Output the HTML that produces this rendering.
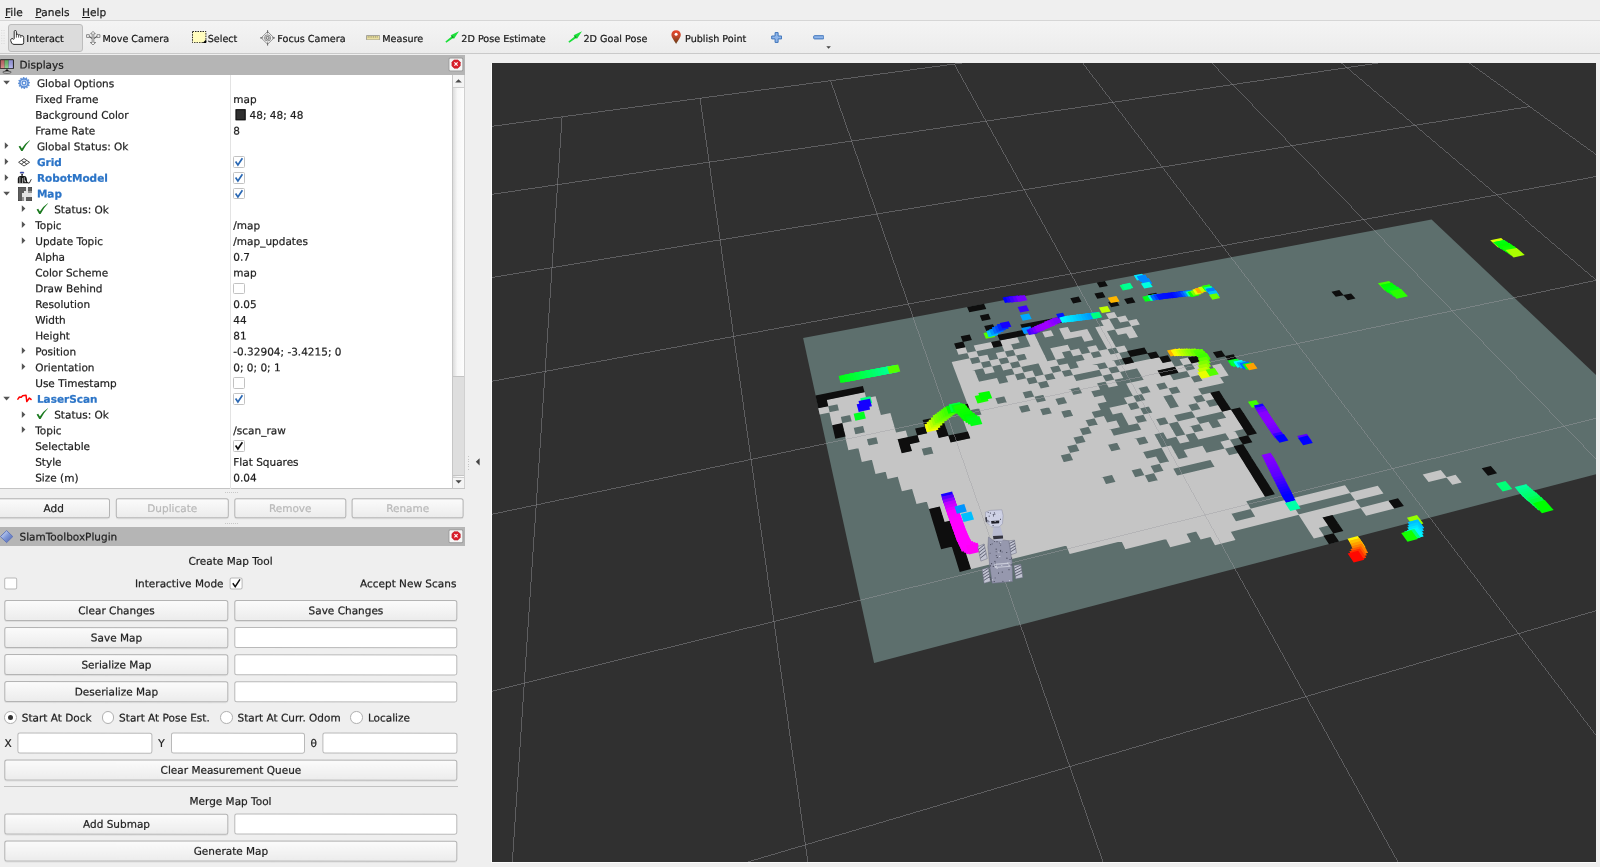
<!DOCTYPE html>
<html><head><meta charset="utf-8"><title>RViz</title><style>
*{box-sizing:border-box;margin:0;padding:0}
html,body{width:1600px;height:867px;overflow:hidden;background:#efefef;font-family:"DejaVu Sans","Liberation Sans",sans-serif;font-size:10.5px;color:#1e1e1e}
#root{position:absolute;left:0;top:0;width:1600px;height:867px}
.a{position:absolute}
.t{position:absolute;left:0;top:0;white-space:nowrap;line-height:15.78px;height:15.78px;transform-origin:0 0;filter:opacity(0.999);-webkit-text-stroke:0.22px}
.menu{position:absolute;left:0;top:0;width:1600px;height:20.8px;background:#efefef;border-bottom:1px solid #d6d6d6}
.menu span{font-size:10.6px}
.tb{position:absolute;left:0;top:21px;width:1600px;height:33px;background:linear-gradient(#f4f4f4,#ececec);border-bottom:1px solid #c9c9c9}
.tb .l{font-size:9.65px;color:#1a1a1a}
.title{position:absolute;left:0;width:464.7px;background:#b5b5b5;}

.close{position:absolute;left:0;top:0;width:14.6px;height:13.9px;background:#f5f5f5;border:0.7px solid #9c9c9c;border-radius:2px;transform-origin:0 0}
.btn{position:absolute;border:1px solid #b4b4b4;border-radius:2.5px;background:linear-gradient(#fbfbfb,#ececec);text-align:center;white-space:nowrap;box-shadow:0 1px 0 #dedede}
.dis{color:#b9b9b9}
.inp{position:absolute;transform-origin:0 0;border:1px solid #b9b9b9;border-radius:2.5px;background:#fff}
.cb{position:absolute;width:11.6px;height:11.6px;border:1px solid #c2c2c2;border-radius:1.5px;background:#fff}
.rb{position:absolute;width:12.6px;height:12.6px;border:1px solid #b0b0b0;border-radius:50%;background:#fff}
.bold{font-weight:bold;color:#2b74c7}
</style></head><body>
<div id="root">
<div class="menu"><span class="t" style="transform:translate(5px,4.9px) skewY(0.05deg);"><u>F</u>ile</span><span class="t" style="transform:translate(35.3px,4.9px) skewY(0.05deg);"><u>P</u>anels</span><span class="t" style="transform:translate(82px,4.9px) skewY(0.05deg);"><u>H</u>elp</span></div>
<div class="tb">
<svg class="a" style="left:0;top:8px" width="8" height="18"><g fill="#d2d2d2"><rect x="1.3" y="1" width="0.9" height="0.9"/><rect x="1.3" y="3.6" width="0.9" height="0.9"/><rect x="1.3" y="6.2" width="0.9" height="0.9"/><rect x="1.3" y="8.8" width="0.9" height="0.9"/><rect x="1.3" y="11.4" width="0.9" height="0.9"/><rect x="1.3" y="14" width="0.9" height="0.9"/><rect x="3.6" y="1" width="0.9" height="0.9"/><rect x="3.6" y="3.6" width="0.9" height="0.9"/><rect x="3.6" y="6.2" width="0.9" height="0.9"/><rect x="3.6" y="8.8" width="0.9" height="0.9"/><rect x="3.6" y="11.4" width="0.9" height="0.9"/><rect x="3.6" y="14" width="0.9" height="0.9"/></g></svg>
<div class="a" style="left:8.2px;top:3.4px;width:74.6px;height:27.2px;background:#dcdcdc;border:1px solid #bdbdbd;border-radius:3px"></div>
<span class="t l" style="transform:translate(26.3px,10.0px) skewY(0.05deg);">Interact</span>
<span class="t l" style="transform:translate(102.5px,10.0px) skewY(0.05deg);">Move Camera</span>
<span class="t l" style="transform:translate(207.7px,10.0px) skewY(0.05deg);">Select</span>
<span class="t l" style="transform:translate(277.3px,10.0px) skewY(0.05deg);">Focus Camera</span>
<span class="t l" style="transform:translate(382.3px,10.0px) skewY(0.05deg);">Measure</span>
<span class="t l" style="transform:translate(461.3px,10.0px) skewY(0.05deg);">2D Pose Estimate</span>
<span class="t l" style="transform:translate(583.5px,10.0px) skewY(0.05deg);">2D Goal Pose</span>
<span class="t l" style="transform:translate(685px,10.0px) skewY(0.05deg);">Publish Point</span>
<svg class="a" style="left:10px;top:9px" width="15" height="15.4"><path d="M4.2 8.6 L4.2 1.6 Q4.2 0.5 5.3 0.5 Q6.4 0.5 6.4 1.6 L6.4 5 Q6.6 4.2 7.5 4.2 Q8.5 4.2 8.6 5.3 Q9 4.7 9.8 4.8 Q10.7 4.9 10.8 5.9 Q11.2 5.5 12 5.6 Q13.6 5.8 13.7 7.4 L13.7 12.8 Q13.7 14.4 12 14.4 L4 14.4 Q2.4 14.4 1.6 13 L0.7 10.6 Q0.4 9 1.8 8.6 Q3.2 8.3 3.6 9.4 Z" fill="#fff" stroke="#2b2b2b" stroke-width="1"/><path d="M6.4 5 V7.6 M8.6 5.3 V7.6 M10.8 6 V7.8" stroke="#2b2b2b" stroke-width="0.8"/></svg><svg class="a" style="left:86.4px;top:9.6px" width="15" height="14.6"><g fill="#fff" stroke="#5a5a5a" stroke-width="0.7" stroke-linejoin="round"><path d="M3.2 5.6 L6.3 7.4 M11.1 5.6 L7.8 7.4" fill="none" stroke-width="1.1"/><rect x="0.6" y="3.7" width="2.7" height="2.7"/><rect x="11" y="3.7" width="2.9" height="2.7"/><path d="M7 0.4 L9.3 2.8 L7.8 2.8 L7.8 11.5 L9.7 11.5 L7 13.9 L4.3 11.5 L6.2 11.5 L6.2 2.8 L4.7 2.8Z"/></g></svg><svg class="a" style="left:191.8px;top:10px" width="15" height="12.4"><rect x="0.5" y="0.5" width="13.4" height="11.2" fill="#fffcbe" stroke="#111" stroke-width="0.9" stroke-dasharray="1.5 1"/><path d="M14.2 8.4 L14.2 11.9 L10.6 11.9Z" fill="#000"/></svg><svg class="a" style="left:260px;top:9.4px" width="15.4" height="15.8"><g fill="none" stroke="#777" stroke-width="0.8"><path d="M7.6 1.6 L14 7.9 L7.6 14.2 L1.2 7.9Z" fill="#f6f6f6"/><circle cx="7.6" cy="7.9" r="3.1" fill="#ddd"/><circle cx="7.6" cy="7.9" r="1.5" stroke="#555"/><path d="M7.6 0.2 V3.4 M7.6 12.4 V15.6 M0 7.9 H3.2 M12 7.9 H15.2" stroke="#666" stroke-width="1"/></g></svg><svg class="a" style="left:366px;top:13.8px" width="14.4" height="5.6"><rect x="0.4" y="0.4" width="13.4" height="4.6" rx="0.6" fill="#e9dfa2" stroke="#8a8a8a" stroke-width="0.8"/><path d="M2.2 1 V2.8 M4 1 V2.8 M5.8 1 V2.8 M7.6 1 V2.8 M9.4 1 V2.8 M11.2 1 V2.8" stroke="#8a855a" stroke-width="0.6"/></svg><svg class="a" style="left:444.8px;top:10.2px" width="15" height="12.4"><path d="M0.4 10.6 L1.3 11.8 L8.2 6.9 L8.9 7.9 L14 0.3 L5.6 4.3 L6.6 5.4 Z" fill="#1be03a"/><path d="M6.2 5.6 L7.4 4.8 L8.6 6.6 L7.7 7.3Z" fill="#157a22" opacity="0.8"/></svg><svg class="a" style="left:567.6px;top:10.2px" width="15" height="12.4"><path d="M0.4 10.6 L1.3 11.8 L8.2 6.9 L8.9 7.9 L14 0.3 L5.6 4.3 L6.6 5.4 Z" fill="#1be03a"/><path d="M6.2 5.6 L7.4 4.8 L8.6 6.6 L7.7 7.3Z" fill="#157a22" opacity="0.8"/></svg><svg class="a" style="left:671.4px;top:9.4px" width="10.4" height="14.4"><defs><linearGradient id="pg" x1="0" y1="0" x2="0" y2="1"><stop offset="0" stop-color="#e8452a"/><stop offset="0.45" stop-color="#c0472a"/><stop offset="1" stop-color="#5e3a14"/></linearGradient></defs><path d="M5.1 0.3 C8 0.3 9.8 2.3 9.8 4.8 C9.8 7.6 6.6 11 5.1 14 C3.6 11 0.4 7.6 0.4 4.8 C0.4 2.3 2.2 0.3 5.1 0.3Z" fill="url(#pg)"/><circle cx="5.1" cy="4.3" r="1.5" fill="#fff"/></svg><svg class="a" style="left:770.8px;top:11.2px" width="11.6" height="11.2"><path d="M4.1 0.6 H7.1 V4 H10.6 V6.9 H7.1 V10.4 H4.1 V6.9 H0.7 V4 H4.1Z" fill="#8fb6ea" stroke="#3f74ba" stroke-width="1" stroke-linejoin="round"/></svg><svg class="a" style="left:812.6px;top:14.3px" width="11.8" height="5"><rect x="0.7" y="0.7" width="10.2" height="3.2" rx="0.8" fill="#8fb6ea" stroke="#3f74ba" stroke-width="1"/></svg><svg class="a" style="left:825.6px;top:24.6px" width="5.4" height="3.4"><path d="M0.3 0.3 H4.9 L2.6 2.8Z" fill="#444"/></svg>
</div>
<div class="title" style="top:55.2px;height:19.6px"><span class="t" style="transform:translate(19.5px,2.6px) skewY(0.05deg);">Displays</span><svg class="a" style="left:0;top:4px" width="15" height="15"><defs><linearGradient id="dg" x1="0" y1="0" x2="0" y2="1"><stop offset="0" stop-color="#000" stop-opacity="0.12"/><stop offset="1" stop-color="#fff" stop-opacity="0.25"/></linearGradient></defs><rect x="0" y="0.3" width="13.9" height="9.8" rx="0.8" fill="#1a1a1a"/><rect x="0.6" y="1.2" width="4" height="8" fill="#cf6f6f"/><rect x="4.6" y="1.2" width="4" height="8" fill="#72c472"/><rect x="8.6" y="1.2" width="4.3" height="8" fill="#a4a4ee"/><rect x="0.6" y="1.2" width="12.3" height="8" fill="url(#dg)"/><path d="M5 12 L7 10 L9 12Z" fill="#111"/><ellipse cx="7" cy="13.2" rx="4.2" ry="1" fill="#e8e8e8" stroke="#222" stroke-width="0.7"/></svg></div>
<div class="close" style="transform:translate(448.4px,57.4px) skewY(0.05deg)"><svg class="a" style="left:1.9px;top:1.3px" width="10" height="10"><path d="M2.8 0.3 L6.4 0.3 L8.9 2.8 L8.9 6.4 L6.4 8.9 L2.8 8.9 L0.3 6.4 L0.3 2.8Z" fill="#d81e2a" stroke="#b8141e" stroke-width="0.5"/><path d="M3.0 3.0 L6.2 6.2 M6.2 3.0 L3.0 6.2" stroke="#fff" stroke-width="1.15"/></svg></div>
<div class="a" style="left:0;top:75px;width:452.4px;height:414px;background:#fff;border-bottom:1px solid #c4c4c4"></div>
<div class="a" style="left:230.4px;top:75px;width:1px;height:413.5px;background:#e3e3e3"></div>
<div class="a" style="left:452.4px;top:75px;width:12.3px;height:414px;background:linear-gradient(90deg,#dcdcdc,#f7f7f7 40%,#fdfdfd);border-left:1px solid #c6c6c6;border-right:1px solid #d0d0d0"></div>
<div class="a" style="left:453.4px;top:75px;width:10.3px;height:12.6px;background:#f4f4f4;border-bottom:1px solid #cfcfcf"></div>
<div class="a" style="left:453.4px;top:477px;width:10.3px;height:11.5px;background:#f4f4f4;border-top:1px solid #cfcfcf"></div>
<div class="a" style="left:453.4px;top:376px;width:10.3px;height:100px;background:#dedede;border-top:1px solid #c4c4c4;border-bottom:1px solid #c4c4c4"></div>
<svg class="a" style="left:452px;top:75px" width="13" height="414"><path d="M3.2 7.6 L6.5 4.2 L9.8 7.6Z" fill="#4a4a4a"/><path d="M3.5 405.3 L6.6 408.6 L9.7 405.3Z" fill="#4a4a4a"/></svg>
<svg class="a" style="left:2.7px;top:80.19px" width="8" height="6"><path d="M0.3 0.8 L6.9 0.8 L3.6 4.6Z" fill="#555"/></svg>
<svg class="a" style="left:18.0px;top:76.69px" width="12" height="12"><path d="M11.85 5.23 L11.90 6.00 L10.66 6.61 L10.54 7.22 L11.45 8.26 L11.11 8.95 L9.73 8.86 L9.32 9.32 L9.59 10.68 L8.95 11.11 L7.80 10.34 L7.22 10.54 L6.77 11.85 L6.00 11.90 L5.39 10.66 L4.78 10.54 L3.74 11.45 L3.05 11.11 L3.14 9.73 L2.68 9.32 L1.32 9.59 L0.89 8.95 L1.66 7.80 L1.46 7.22 L0.15 6.77 L0.10 6.00 L1.34 5.39 L1.46 4.78 L0.55 3.74 L0.89 3.05 L2.27 3.14 L2.68 2.68 L2.41 1.32 L3.05 0.89 L4.20 1.66 L4.78 1.46 L5.23 0.15 L6.00 0.10 L6.61 1.34 L7.22 1.46 L8.26 0.55 L8.95 0.89 L8.86 2.27 L9.32 2.68 L10.68 2.41 L11.11 3.05 L10.34 4.20 L10.54 4.78Z" fill="#5a8dd8" stroke="#4c80cc" stroke-width="0.3"/><circle cx="6" cy="6" r="3.3" fill="#c7daf4"/><circle cx="6" cy="6" r="2.4" fill="#5a8dd8"/><circle cx="6" cy="6" r="1.2" fill="#eef4fc"/></svg>
<span class="t" style="transform:translate(36.9px,76.1px) skewY(0.05deg);">Global Options</span>
<span class="t" style="transform:translate(35.2px,91.88px) skewY(0.05deg);">Fixed Frame</span>
<span class="t" style="transform:translate(233.3px,91.88px) skewY(0.05deg);">map</span>
<span class="t" style="transform:translate(35.2px,107.66px) skewY(0.05deg);">Background Color</span>
<div class="a" style="left:0;top:0;transform:translate(235.6px,109.25px) skewY(0.05deg);width:10.2px;height:10.5px;background:#303030;border:0.6px solid #111"></div>
<span class="t" style="transform:translate(249.6px,107.66px) skewY(0.05deg);">48; 48; 48</span>
<span class="t" style="transform:translate(35.2px,123.44px) skewY(0.05deg);">Frame Rate</span>
<span class="t" style="transform:translate(233.3px,123.44px) skewY(0.05deg);">8</span>
<svg class="a" style="left:4.0px;top:142.31px" width="6" height="8"><path d="M0.8 0.3 L0.8 6.9 L4.4 3.6Z" fill="#555"/></svg>
<svg class="a" style="left:18.1px;top:140.01px" width="13" height="12"><path d="M0.6 6.6 L2.2 5.7 L3.9 8.4 Q7 3.2 11.8 0.2 L12 0.6 Q8 4.5 4.6 11 L3.2 11 Z" fill="#1b7a1f"/></svg>
<span class="t" style="transform:translate(36.9px,139.22px) skewY(0.05deg);">Global Status: Ok</span>
<svg class="a" style="left:4.0px;top:158.09px" width="6" height="8"><path d="M0.8 0.3 L0.8 6.9 L4.4 3.6Z" fill="#555"/></svg>
<svg class="a" style="left:18.3px;top:157.59px" width="13" height="9"><path d="M0.6 4.3 L6 0.6 L11.6 4.3 L6 8 Z M3.3 2.4 L8.8 6.1 M8.8 2.4 L3.3 6.1" fill="#fff" stroke="#333" stroke-width="0.9" stroke-linejoin="round"/></svg>
<span class="t bold" style="transform:translate(36.9px,155.0px) skewY(0.05deg);">Grid</span>
<div class="cb" style="left:233.2px;top:156.29px"></div>
<svg class="a" style="left:233.2px;top:156.29px" width="13" height="13"><path d="M2.6 5.6 L4.9 8.9 L9.4 2.2" fill="none" stroke="#2a68b4" stroke-width="1.7"/></svg>
<svg class="a" style="left:4.0px;top:173.86999999999998px" width="6" height="8"><path d="M0.8 0.3 L0.8 6.9 L4.4 3.6Z" fill="#555"/></svg>
<svg class="a" style="left:17.2px;top:171.17px" width="15" height="13"><ellipse cx="5" cy="1.7" rx="2.4" ry="1.3" fill="#9aa0c0"/><rect x="3.2" y="1.1" width="3.6" height="0.9" fill="#2a3aa8"/><rect x="4.2" y="3.1" width="1.8" height="1.6" fill="#222"/><path d="M0.8 12.3 L0.8 7.4 Q1 5.2 3 5 L7.4 5 Q9.2 5.2 9.6 7 L10.2 10.8 L11.2 11.4 L11.2 12.3 Z" fill="#161616"/><path d="M2.9 6.2 V12.3 M5.6 7 V12.3 M7.3 6.2 V10.2" stroke="#e8e8e8" stroke-width="0.7"/><rect x="7.6" y="9.6" width="1.3" height="1.6" fill="#d0d0d0"/><path d="M11 12 L12.4 12 L14.3 8.2" fill="none" stroke="#222" stroke-width="0.9"/></svg>
<span class="t bold" style="transform:translate(36.9px,170.78px) skewY(0.05deg);">RobotModel</span>
<div class="cb" style="left:233.2px;top:172.07px"></div>
<svg class="a" style="left:233.2px;top:172.07px" width="13" height="13"><path d="M2.6 5.6 L4.9 8.9 L9.4 2.2" fill="none" stroke="#2a68b4" stroke-width="1.7"/></svg>
<svg class="a" style="left:2.7px;top:190.65px" width="8" height="6"><path d="M0.3 0.8 L6.9 0.8 L3.6 4.6Z" fill="#555"/></svg>
<svg class="a" style="left:17.6px;top:187.15px" width="14" height="14"><rect x="0" y="0" width="14" height="14" fill="#f2f2f2"/><rect x="0" y="0" width="2" height="2" fill="#454545"/><rect x="2" y="0" width="2" height="2" fill="#454545"/><rect x="4" y="0" width="2" height="2" fill="#454545"/><rect x="6" y="0" width="2" height="2" fill="#454545"/><rect x="10" y="0" width="2" height="2" fill="#454545"/><rect x="12" y="0" width="2" height="2" fill="#454545"/><rect x="0" y="2" width="2" height="2" fill="#454545"/><rect x="2" y="2" width="2" height="2" fill="#454545"/><rect x="4" y="2" width="2" height="2" fill="#454545"/><rect x="6" y="2" width="2" height="2" fill="#454545"/><rect x="10" y="2" width="2" height="2" fill="#454545"/><rect x="12" y="2" width="2" height="2" fill="#454545"/><rect x="0" y="4" width="2" height="2" fill="#454545"/><rect x="2" y="4" width="2" height="2" fill="#454545"/><rect x="4" y="4" width="2" height="2" fill="#454545"/><rect x="10" y="4" width="2" height="2" fill="#8a8a8a"/><rect x="12" y="4" width="2" height="2" fill="#8a8a8a"/><rect x="0" y="6" width="2" height="2" fill="#454545"/><rect x="2" y="6" width="2" height="2" fill="#454545"/><rect x="0" y="8" width="2" height="2" fill="#454545"/><rect x="2" y="8" width="2" height="2" fill="#454545"/><rect x="0" y="10" width="2" height="2" fill="#454545"/><rect x="2" y="10" width="2" height="2" fill="#454545"/><rect x="4" y="10" width="2" height="2" fill="#8a8a8a"/><rect x="8" y="10" width="2" height="2" fill="#454545"/><rect x="10" y="10" width="2" height="2" fill="#454545"/><rect x="12" y="10" width="2" height="2" fill="#454545"/><rect x="0" y="12" width="2" height="2" fill="#454545"/><rect x="2" y="12" width="2" height="2" fill="#454545"/><rect x="4" y="12" width="2" height="2" fill="#8a8a8a"/><rect x="8" y="12" width="2" height="2" fill="#454545"/><rect x="10" y="12" width="2" height="2" fill="#454545"/><rect x="12" y="12" width="2" height="2" fill="#454545"/><path d="M0 2H14M0 4H14M0 6H14M0 8H14M0 10H14M0 12H14M2 0V14M4 0V14M6 0V14M8 0V14M10 0V14M12 0V14" stroke="#bdbdbd" stroke-width="0.35" opacity="0.7"/></svg>
<span class="t bold" style="transform:translate(36.9px,186.56px) skewY(0.05deg);">Map</span>
<div class="cb" style="left:233.2px;top:187.85px"></div>
<svg class="a" style="left:233.2px;top:187.85px" width="13" height="13"><path d="M2.6 5.6 L4.9 8.9 L9.4 2.2" fill="none" stroke="#2a68b4" stroke-width="1.7"/></svg>
<svg class="a" style="left:21.400000000000002px;top:205.42999999999998px" width="6" height="8"><path d="M0.8 0.3 L0.8 6.9 L4.4 3.6Z" fill="#555"/></svg>
<svg class="a" style="left:35.6px;top:203.13px" width="13" height="12"><path d="M0.6 6.6 L2.2 5.7 L3.9 8.4 Q7 3.2 11.8 0.2 L12 0.6 Q8 4.5 4.6 11 L3.2 11 Z" fill="#1b7a1f"/></svg>
<span class="t" style="transform:translate(54.2px,202.34px) skewY(0.05deg);">Status: Ok</span>
<svg class="a" style="left:21.400000000000002px;top:221.20999999999998px" width="6" height="8"><path d="M0.8 0.3 L0.8 6.9 L4.4 3.6Z" fill="#555"/></svg>
<span class="t" style="transform:translate(35.2px,218.12px) skewY(0.05deg);">Topic</span>
<span class="t" style="transform:translate(233.3px,218.12px) skewY(0.05deg);">/map</span>
<svg class="a" style="left:21.400000000000002px;top:236.98999999999998px" width="6" height="8"><path d="M0.8 0.3 L0.8 6.9 L4.4 3.6Z" fill="#555"/></svg>
<span class="t" style="transform:translate(35.2px,233.9px) skewY(0.05deg);">Update Topic</span>
<span class="t" style="transform:translate(233.3px,233.9px) skewY(0.05deg);">/map_updates</span>
<span class="t" style="transform:translate(35.2px,249.68px) skewY(0.05deg);">Alpha</span>
<span class="t" style="transform:translate(233.3px,249.68px) skewY(0.05deg);">0.7</span>
<span class="t" style="transform:translate(35.2px,265.46px) skewY(0.05deg);">Color Scheme</span>
<span class="t" style="transform:translate(233.3px,265.46px) skewY(0.05deg);">map</span>
<span class="t" style="transform:translate(35.2px,281.24px) skewY(0.05deg);">Draw Behind</span>
<div class="cb" style="left:233.2px;top:282.53px"></div>
<span class="t" style="transform:translate(35.2px,297.02px) skewY(0.05deg);">Resolution</span>
<span class="t" style="transform:translate(233.3px,297.02px) skewY(0.05deg);">0.05</span>
<span class="t" style="transform:translate(35.2px,312.8px) skewY(0.05deg);">Width</span>
<span class="t" style="transform:translate(233.3px,312.8px) skewY(0.05deg);">44</span>
<span class="t" style="transform:translate(35.2px,328.58px) skewY(0.05deg);">Height</span>
<span class="t" style="transform:translate(233.3px,328.58px) skewY(0.05deg);">81</span>
<svg class="a" style="left:21.400000000000002px;top:347.45px" width="6" height="8"><path d="M0.8 0.3 L0.8 6.9 L4.4 3.6Z" fill="#555"/></svg>
<span class="t" style="transform:translate(35.2px,344.36px) skewY(0.05deg);">Position</span>
<span class="t" style="transform:translate(233.3px,344.36px) skewY(0.05deg);">-0.32904; -3.4215; 0</span>
<svg class="a" style="left:21.400000000000002px;top:363.22999999999996px" width="6" height="8"><path d="M0.8 0.3 L0.8 6.9 L4.4 3.6Z" fill="#555"/></svg>
<span class="t" style="transform:translate(35.2px,360.14px) skewY(0.05deg);">Orientation</span>
<span class="t" style="transform:translate(233.3px,360.14px) skewY(0.05deg);">0; 0; 0; 1</span>
<span class="t" style="transform:translate(35.2px,375.92px) skewY(0.05deg);">Use Timestamp</span>
<div class="cb" style="left:233.2px;top:377.21px"></div>
<svg class="a" style="left:2.7px;top:395.7899999999999px" width="8" height="6"><path d="M0.3 0.8 L6.9 0.8 L3.6 4.6Z" fill="#555"/></svg>
<svg class="a" style="left:17.0px;top:394.49px" width="16" height="9"><path d="M0.9 5.2 L2.4 3 L4.3 3.2 L5.6 1.8 L9 1.2 L9.8 7.6 L12.4 4 L14 5.4" fill="none" stroke="#f00" stroke-width="1.5" stroke-linejoin="round" stroke-linecap="round"/></svg>
<span class="t bold" style="transform:translate(36.9px,391.7px) skewY(0.05deg);">LaserScan</span>
<div class="cb" style="left:233.2px;top:392.99px"></div>
<svg class="a" style="left:233.2px;top:392.99px" width="13" height="13"><path d="M2.6 5.6 L4.9 8.9 L9.4 2.2" fill="none" stroke="#2a68b4" stroke-width="1.7"/></svg>
<svg class="a" style="left:21.400000000000002px;top:410.57px" width="6" height="8"><path d="M0.8 0.3 L0.8 6.9 L4.4 3.6Z" fill="#555"/></svg>
<svg class="a" style="left:35.6px;top:408.27px" width="13" height="12"><path d="M0.6 6.6 L2.2 5.7 L3.9 8.4 Q7 3.2 11.8 0.2 L12 0.6 Q8 4.5 4.6 11 L3.2 11 Z" fill="#1b7a1f"/></svg>
<span class="t" style="transform:translate(54.2px,407.48px) skewY(0.05deg);">Status: Ok</span>
<svg class="a" style="left:21.400000000000002px;top:426.34999999999997px" width="6" height="8"><path d="M0.8 0.3 L0.8 6.9 L4.4 3.6Z" fill="#555"/></svg>
<span class="t" style="transform:translate(35.2px,423.26px) skewY(0.05deg);">Topic</span>
<span class="t" style="transform:translate(233.3px,423.26px) skewY(0.05deg);">/scan_raw</span>
<span class="t" style="transform:translate(35.2px,439.04px) skewY(0.05deg);">Selectable</span>
<div class="cb" style="left:233.2px;top:440.33px"></div>
<svg class="a" style="left:233.2px;top:440.33px" width="13" height="13"><path d="M2.6 5.6 L4.9 8.9 L9.4 2.2" fill="none" stroke="#111" stroke-width="1.7"/></svg>
<span class="t" style="transform:translate(35.2px,454.82px) skewY(0.05deg);">Style</span>
<span class="t" style="transform:translate(233.3px,454.82px) skewY(0.05deg);">Flat Squares</span>
<span class="t" style="transform:translate(35.2px,470.6px) skewY(0.05deg);">Size (m)</span>
<span class="t" style="transform:translate(233.3px,470.6px) skewY(0.05deg);">0.04</span>
<div class="btn" style="left:0;top:0;transform:translate(-3px,498.2px) skewY(0.05deg);width:113.3px;height:20.1px"></div>
<span class="t" style="transform:translate(-46.35px,500.86px) skewY(0.05deg);width:200px;text-align:center">Add</span>
<div class="btn" style="left:0;top:0;transform:translate(115.8px,498.2px) skewY(0.05deg);width:112.9px;height:20.1px"></div>
<span class="t dis" style="transform:translate(72.25px,500.86px) skewY(0.05deg);width:200px;text-align:center">Duplicate</span>
<div class="btn" style="left:0;top:0;transform:translate(234.3px,498.2px) skewY(0.05deg);width:111.9px;height:20.1px"></div>
<span class="t dis" style="transform:translate(190.25px,500.86px) skewY(0.05deg);width:200px;text-align:center">Remove</span>
<div class="btn" style="left:0;top:0;transform:translate(351.6px,498.2px) skewY(0.05deg);width:112.2px;height:20.1px"></div>
<span class="t dis" style="transform:translate(307.7px,500.86px) skewY(0.05deg);width:200px;text-align:center">Rename</span>
<div class="a" style="left:452.4px;top:488px;width:12.3px;height:1px;background:#c4c4c4"></div>
<div class="a" style="left:468px;top:455.5px;width:1px;height:15px;background:repeating-linear-gradient(180deg,#c4c4c4 0 1px,transparent 1px 2.6px)"></div>
<div class="a" style="left:225px;top:491.5px;width:13px;height:1px;background:repeating-linear-gradient(90deg,#c8c8c8 0 1px,transparent 1px 2px)"></div>
<div class="a" style="left:225px;top:523px;width:13px;height:1px;background:repeating-linear-gradient(90deg,#c8c8c8 0 1px,transparent 1px 2px)"></div>
<div class="title" style="top:527.2px;height:19px"><span class="t" style="transform:translate(19.5px,2.5px) skewY(0.05deg);">SlamToolboxPlugin</span><svg class="a" style="left:0;top:3px" width="14" height="14"><defs><linearGradient id="sg" x1="0" y1="0" x2="1" y2="1"><stop offset="0" stop-color="#e8eefc"/><stop offset="0.5" stop-color="#7f98d8"/><stop offset="1" stop-color="#4a5ca8"/></linearGradient></defs><path d="M0.4 6.6 L6.6 0.6 L12.8 6.6 L6.6 12.6Z" fill="url(#sg)" stroke="#5a70b8" stroke-width="0.9"/></svg></div>
<div class="close" style="transform:translate(448.4px,529.2px) skewY(0.05deg)"><svg class="a" style="left:1.9px;top:1.3px" width="10" height="10"><path d="M2.8 0.3 L6.4 0.3 L8.9 2.8 L8.9 6.4 L6.4 8.9 L2.8 8.9 L0.3 6.4 L0.3 2.8Z" fill="#d81e2a" stroke="#b8141e" stroke-width="0.5"/><path d="M3.0 3.0 L6.2 6.2 M6.2 3.0 L3.0 6.2" stroke="#fff" stroke-width="1.15"/></svg></div>
<span class="t" style="transform:translate(130.5px,553.61px) skewY(0.05deg);width:200px;text-align:center">Create Map Tool</span>
<div class="cb" style="left:0;top:0;transform:translate(4.2px,577.4px) skewY(0.05deg);transform-origin:0 0;width:12.6px;height:12.2px;border-color:#b8b8b8;border-radius:2px"></div>
<span class="t" style="transform:translate(135px,576.21px) skewY(0.05deg);">Interactive Mode</span>
<div class="cb" style="left:0;top:0;transform:translate(229.6px,577.4px) skewY(0.05deg);transform-origin:0 0;width:12.6px;height:12.2px;border-color:#b8b8b8;border-radius:2px"></div>
<svg class="a" style="left:229.8px;top:577.3px" width="13" height="13"><path d="M2.8 6.2 L5.2 9.6 L10 2.4" fill="none" stroke="#111" stroke-width="1.5"/></svg>
<span class="t" style="transform:translate(360px,576.21px) skewY(0.05deg);">Accept New Scans</span>
<div class="btn" style="left:0;top:0;transform:translate(4.3px,600px) skewY(0.05deg);width:224.4px;height:21.2px"></div>
<span class="t" style="transform:translate(16.5px,603.21px) skewY(0.05deg);width:200px;text-align:center">Clear Changes</span>
<div class="btn" style="left:0;top:0;transform:translate(234.3px,600px) skewY(0.05deg);width:223.3px;height:21.2px"></div>
<span class="t" style="transform:translate(245.95px,603.21px) skewY(0.05deg);width:200px;text-align:center">Save Changes</span>
<div class="btn" style="left:0;top:0;transform:translate(4.3px,627.1px) skewY(0.05deg);width:224.4px;height:21.2px"></div>
<span class="t" style="transform:translate(16.5px,630.31px) skewY(0.05deg);width:200px;text-align:center">Save Map</span>
<div class="inp" style="left:0;top:0;transform:translate(234.3px,627.1px) skewY(0.05deg);width:223.3px;height:21.2px"></div>
<div class="btn" style="left:0;top:0;transform:translate(4.3px,654.2px) skewY(0.05deg);width:224.4px;height:21.2px"></div>
<span class="t" style="transform:translate(16.5px,657.41px) skewY(0.05deg);width:200px;text-align:center">Serialize Map</span>
<div class="inp" style="left:0;top:0;transform:translate(234.3px,654.2px) skewY(0.05deg);width:223.3px;height:21.2px"></div>
<div class="btn" style="left:0;top:0;transform:translate(4.3px,681.2px) skewY(0.05deg);width:224.4px;height:21.2px"></div>
<span class="t" style="transform:translate(16.5px,684.41px) skewY(0.05deg);width:200px;text-align:center">Deserialize Map</span>
<div class="inp" style="left:0;top:0;transform:translate(234.3px,681.2px) skewY(0.05deg);width:223.3px;height:21.2px"></div>
<div class="rb" style="left:4.3px;top:711.4px"></div>
<div class="a" style="left:8.1px;top:715.2px;width:5px;height:5px;border-radius:50%;background:#333"></div>
<span class="t" style="transform:translate(21.8px,710.41px) skewY(0.05deg);">Start At Dock</span>
<div class="rb" style="left:101.6px;top:711.4px"></div>
<span class="t" style="transform:translate(119.1px,710.41px) skewY(0.05deg);">Start At Pose Est.</span>
<div class="rb" style="left:220px;top:711.4px"></div>
<span class="t" style="transform:translate(237.5px,710.41px) skewY(0.05deg);">Start At Curr. Odom</span>
<div class="rb" style="left:350.4px;top:711.4px"></div>
<span class="t" style="transform:translate(367.9px,710.41px) skewY(0.05deg);">Localize</span>
<span class="t" style="transform:translate(4.6px,736.01px) skewY(0.05deg);">X</span>
<span class="t" style="transform:translate(158.2px,736.01px) skewY(0.05deg);">Y</span>
<span class="t" style="transform:translate(310.5px,736.01px) skewY(0.05deg);">θ</span>
<div class="inp" style="left:0;top:0;transform:translate(17.4px,732.6px) skewY(0.05deg);width:135.3px;height:21.2px"></div>
<div class="inp" style="left:0;top:0;transform:translate(171px,732.6px) skewY(0.05deg);width:133.6px;height:21.2px"></div>
<div class="inp" style="left:0;top:0;transform:translate(322.4px,732.6px) skewY(0.05deg);width:135.2px;height:21.2px"></div>
<div class="btn" style="left:0;top:0;transform:translate(4.3px,759.6px) skewY(0.05deg);width:453.3px;height:21.0px"></div>
<span class="t" style="transform:translate(130.95px,762.71px) skewY(0.05deg);width:200px;text-align:center">Clear Measurement Queue</span>
<div class="a" style="left:4.3px;top:786.3px;width:453.3px;height:1px;background:#c2c2c2"></div>
<span class="t" style="transform:translate(130.5px,793.81px) skewY(0.05deg);width:200px;text-align:center">Merge Map Tool</span>
<div class="btn" style="left:0;top:0;transform:translate(4.3px,813.6px) skewY(0.05deg);width:224.4px;height:21.0px"></div>
<span class="t" style="transform:translate(16.5px,816.71px) skewY(0.05deg);width:200px;text-align:center">Add Submap</span>
<div class="inp" style="left:0;top:0;transform:translate(234.3px,813.6px) skewY(0.05deg);width:223.3px;height:21px"></div>
<div class="btn" style="left:0;top:0;transform:translate(4.3px,840.6px) skewY(0.05deg);width:453.3px;height:21.0px"></div>
<span class="t" style="transform:translate(130.95px,843.71px) skewY(0.05deg);width:200px;text-align:center">Generate Map</span>
<div class="a" style="left:491.4px;top:62.9px;width:1104.3px;height:799.9px;background:#fbfbfb"></div>
<svg class="a" style="left:474px;top:457px" width="8" height="10"><path d="M5.6 1.2 L5.6 8.4 L1.8 4.8Z" fill="#444"/></svg>
<svg class="a" style="left:492.3px;top:62.9px;background:#303030" width="1103.4" height="798.9" viewBox="492.3 62.9 1103.4 798.9">
<path d="M803.4 337.8 1431.9 219.4 1678.6 452.6 874.4 662.9Z" fill="#5d6f6d"/><path d="M1106.1 313.6 1114.6 311.9 1117.7 317.3 1109.2 319.0ZM956.6 348.8 965.7 347.0 967.9 352.8 958.8 354.6ZM974.0 345.4 991.7 341.9 994.1 347.6 976.4 351.1ZM1000.0 340.3 1017.4 336.8 1020.0 342.5 1002.5 346.0ZM1025.6 335.2 1034.4 333.5 1037.1 339.1 1028.3 340.8ZM1042.6 331.9 1051.3 330.1 1054.1 335.7 1045.3 337.5ZM1059.4 328.5 1068.1 326.8 1070.9 332.4 1062.2 334.1ZM1100.9 320.4 1109.4 318.7 1112.5 324.1 1103.9 325.8ZM1117.2 317.1 1125.7 315.5 1128.9 320.9 1120.4 322.5ZM967.5 352.7 976.6 350.9 979.0 356.7 969.8 358.5ZM1002.4 345.7 1011.3 344.0 1013.9 349.7 1004.9 351.5ZM1028.2 340.6 1037.0 338.9 1039.7 344.5 1030.8 346.3ZM1062.1 333.9 1087.5 328.8 1090.5 334.4 1064.9 339.5ZM1095.5 327.2 1112.4 323.9 1115.5 329.4 1098.6 332.8ZM1128.4 320.7 1136.9 319.0 1140.2 324.5 1131.7 326.2ZM952.0 361.8 970.1 358.2 972.4 364.2 954.2 367.8ZM978.5 356.5 987.7 354.7 990.1 360.6 980.9 362.5ZM996.1 353.0 1005.1 351.2 1007.7 357.1 998.6 358.9ZM1013.5 349.6 1039.6 344.3 1042.4 350.1 1016.1 355.4ZM1081.7 335.9 1090.4 334.2 1093.5 339.8 1084.7 341.6ZM1098.4 332.6 1107.1 330.8 1110.2 336.4 1101.5 338.2ZM1115.1 329.3 1131.9 325.9 1135.1 331.4 1118.2 334.8ZM954.1 367.6 981.2 362.2 983.6 368.1 956.4 373.7ZM989.7 360.4 998.8 358.6 1001.4 364.5 992.2 366.4ZM1007.2 356.9 1016.3 355.1 1018.9 361.0 1009.8 362.8ZM1024.7 353.4 1042.3 349.9 1045.1 355.7 1027.3 359.3ZM1050.5 348.2 1068.0 344.7 1070.9 350.5 1053.4 354.0ZM1101.4 338.0 1110.1 336.2 1113.3 341.9 1104.5 343.6ZM1126.4 332.9 1135.0 331.2 1138.3 336.8 1129.7 338.5ZM826.7 399.7 864.9 392.0 866.6 398.3 828.2 406.2ZM956.3 373.4 974.6 369.7 977.0 375.8 958.6 379.6ZM983.2 368.0 992.4 366.1 994.9 372.1 985.6 374.0ZM1000.9 364.4 1010.1 362.5 1012.7 368.5 1003.5 370.4ZM1018.5 360.8 1045.0 355.5 1047.8 361.4 1021.2 366.8ZM1053.3 353.8 1062.2 352.0 1065.1 357.8 1056.1 359.7ZM1070.4 350.3 1079.3 348.5 1082.3 354.3 1073.4 356.1ZM1087.5 346.8 1096.3 345.1 1099.4 350.8 1090.5 352.6ZM1104.4 343.4 1113.2 341.6 1116.4 347.4 1107.6 349.2ZM818.5 407.9 828.5 405.8 830.0 412.4 820.0 414.5ZM837.7 404.0 875.9 396.2 877.7 402.6 839.2 410.5ZM958.5 379.3 976.9 375.6 979.4 381.7 960.9 385.5ZM1012.2 368.4 1021.4 366.5 1024.1 372.5 1014.9 374.4ZM1038.6 363.0 1056.4 359.4 1059.3 365.3 1041.4 369.0ZM1081.9 354.2 1090.8 352.3 1093.9 358.2 1084.9 360.0ZM1099.0 350.7 1107.8 348.9 1111.0 354.7 1102.1 356.5ZM1115.9 347.2 1124.7 345.4 1128.0 351.2 1119.1 353.0ZM829.6 412.2 877.7 402.4 879.5 408.9 831.1 418.9ZM960.8 385.3 997.3 377.8 999.8 384.0 963.1 391.6ZM1005.9 376.0 1015.1 374.1 1017.8 380.3 1008.5 382.2ZM1023.6 372.4 1032.8 370.5 1035.6 376.6 1026.4 378.5ZM1041.3 368.7 1050.4 366.9 1053.3 372.9 1044.1 374.8ZM1058.8 365.2 1067.9 363.3 1070.8 369.3 1061.7 371.2ZM1076.2 361.6 1119.4 352.7 1122.6 358.6 1079.2 367.6ZM831.0 418.6 841.1 416.6 842.7 423.3 832.6 425.4ZM850.3 414.6 879.4 408.6 881.3 415.2 852.0 421.3ZM963.0 391.3 1026.6 378.2 1029.4 384.4 965.4 397.7ZM1035.2 376.4 1044.4 374.5 1047.2 380.7 1038.0 382.6ZM1052.8 372.8 1062.0 370.9 1065.0 377.0 1055.8 378.9ZM1070.4 369.1 1096.8 363.7 1100.0 369.7 1073.4 375.2ZM1105.0 362.0 1114.0 360.1 1117.3 366.1 1108.3 367.9ZM842.3 423.1 890.7 413.0 892.7 419.7 843.9 429.9ZM965.3 397.5 1038.2 382.3 1041.1 388.5 967.7 403.9ZM1046.8 380.5 1073.6 374.9 1076.7 381.1 1049.7 386.7ZM1099.5 369.5 1108.5 367.6 1111.8 373.7 1102.7 375.6ZM1116.8 365.9 1159.8 357.0 1163.3 362.9 1120.1 372.0ZM843.8 429.6 854.0 427.5 855.7 434.4 845.5 436.5ZM863.3 425.6 892.6 419.4 894.6 426.2 865.1 432.4ZM967.6 403.7 995.6 397.8 998.3 404.3 970.1 410.2ZM1004.4 396.0 1023.0 392.1 1025.7 398.5 1007.1 402.4ZM1031.6 390.3 1102.9 375.3 1106.2 381.5 1034.5 396.6ZM1111.3 373.5 1120.3 371.6 1123.7 377.8 1114.6 379.7ZM1137.2 368.1 1171.7 360.9 1175.3 366.8 1140.7 374.2ZM1179.8 359.2 1188.5 357.3 1192.3 363.3 1183.5 365.1ZM845.4 436.3 894.5 425.9 896.5 432.8 847.1 443.3ZM960.6 411.9 970.4 409.9 972.8 416.5 963.1 418.6ZM979.3 408.0 1034.7 396.3 1037.6 402.7 981.8 414.6ZM1043.4 394.5 1070.7 388.7 1073.8 395.0 1046.3 400.9ZM1079.2 386.9 1097.3 383.1 1100.5 389.3 1082.4 393.2ZM1105.7 381.3 1114.8 379.4 1118.2 385.6 1109.0 387.5ZM1140.6 373.9 1158.1 370.2 1161.7 376.3 1144.1 380.1ZM1174.8 366.7 1183.7 364.8 1187.4 370.8 1178.5 372.7ZM1191.8 363.1 1200.6 361.3 1204.4 367.2 1195.6 369.1ZM847.0 443.0 867.1 438.7 869.0 445.8 848.7 450.1ZM876.5 436.7 906.1 430.4 908.2 437.3 878.4 443.7ZM925.0 426.4 934.9 424.3 937.2 431.1 927.2 433.3ZM963.0 418.3 1019.2 406.4 1022.0 413.0 965.4 425.1ZM1028.0 404.5 1055.6 398.6 1058.7 405.1 1030.8 411.1ZM1064.3 396.8 1091.5 391.0 1094.8 397.3 1067.4 403.2ZM1126.5 383.5 1170.2 374.2 1173.9 380.4 1129.9 389.8ZM1186.9 370.7 1204.2 367.0 1208.1 373.0 1190.7 376.8ZM1212.3 365.3 1221.1 363.4 1225.1 369.4 1216.3 371.3ZM858.6 447.7 898.4 439.2 900.4 446.2 860.4 454.8ZM917.4 435.1 937.1 430.9 939.4 437.8 919.6 442.1ZM965.3 424.8 1040.3 408.7 1043.2 415.4 967.8 431.6ZM1049.1 406.9 1103.6 395.2 1106.9 401.6 1052.1 413.5ZM1129.8 389.6 1138.9 387.6 1142.5 393.9 1133.3 395.9ZM1147.3 385.8 1156.4 383.9 1160.1 390.1 1150.9 392.1ZM1164.7 382.1 1190.9 376.5 1194.8 382.6 1168.4 388.3ZM1199.1 374.7 1224.9 369.2 1229.0 375.3 1203.0 380.9ZM860.3 454.6 900.3 445.9 902.4 453.1 862.1 461.8ZM909.7 443.9 948.9 435.4 951.3 442.4 911.9 451.0ZM967.7 431.4 1061.5 411.1 1064.6 417.8 970.2 438.3ZM1070.3 409.2 1097.8 403.3 1101.1 409.8 1073.4 415.9ZM1124.3 397.6 1133.5 395.6 1137.0 402.0 1127.8 404.0ZM1142.0 393.8 1168.6 388.0 1172.4 394.3 1145.6 400.2ZM1177.0 386.2 1220.3 376.9 1224.3 383.0 1180.8 392.5ZM872.1 459.4 922.0 448.5 924.2 455.7 874.0 466.7ZM931.4 446.5 1091.9 411.6 1095.2 418.2 933.7 453.6ZM1109.7 407.7 1128.0 403.7 1131.5 410.3 1113.1 414.3ZM1136.5 401.9 1163.5 396.0 1167.2 402.4 1140.1 408.4ZM1171.9 394.2 1198.4 388.4 1202.3 394.7 1175.7 400.6ZM873.9 466.4 1085.9 420.0 1089.2 426.7 875.8 473.8ZM1094.7 418.0 1104.2 415.9 1107.6 422.7 1098.1 424.8ZM1122.0 412.1 1140.4 408.0 1144.0 414.6 1125.5 418.7ZM1148.9 406.2 1167.1 402.2 1170.9 408.7 1152.6 412.7ZM1175.5 400.3 1193.4 396.4 1197.4 402.8 1179.4 406.8ZM1201.8 394.6 1210.9 392.6 1214.9 399.0 1205.8 401.0ZM885.9 471.3 1079.9 428.5 1083.2 435.4 887.9 478.8ZM1088.7 426.5 1116.7 420.4 1120.2 427.1 1092.1 433.4ZM1125.4 418.4 1134.8 416.4 1138.4 423.1 1129.0 425.2ZM1143.5 414.5 1188.4 404.5 1192.4 411.1 1147.2 421.1ZM1196.9 402.7 1206.0 400.7 1210.1 407.2 1200.9 409.2ZM898.0 476.3 1073.7 437.2 1076.9 444.2 900.1 483.8ZM1082.6 435.2 1110.8 428.9 1114.3 435.8 1086.0 442.2ZM1137.9 422.9 1156.4 418.8 1160.2 425.5 1141.6 429.7ZM1165.1 416.9 1174.4 414.8 1178.3 421.5 1168.9 423.6ZM1191.9 410.9 1218.7 405.0 1222.8 411.5 1195.9 417.6ZM900.0 483.5 1067.4 446.0 1070.6 453.2 902.2 491.2ZM1076.4 444.0 1169.1 423.3 1173.0 430.1 1079.8 451.1ZM1177.8 421.3 1196.1 417.2 1200.1 423.9 1181.7 428.1ZM1222.3 411.3 1231.5 409.3 1235.7 415.9 1226.5 418.0ZM912.3 488.6 1061.0 455.0 1064.2 462.3 914.6 496.3ZM1070.1 453.0 1108.3 444.4 1111.8 451.5 1073.4 460.2ZM1117.2 442.3 1136.2 438.1 1139.9 445.1 1120.8 449.4ZM1145.0 436.1 1154.6 433.9 1158.4 440.9 1148.8 443.1ZM1163.4 431.9 1172.9 429.8 1176.8 436.7 1167.3 438.9ZM1181.6 427.8 1191.0 425.7 1195.0 432.6 1185.6 434.7ZM1199.6 423.8 1208.9 421.7 1213.1 428.4 1203.7 430.6ZM1217.5 419.7 1235.6 415.6 1239.9 422.3 1221.7 426.5ZM914.5 496.0 1158.3 440.6 1162.2 447.7 916.8 503.9ZM1176.3 436.5 1185.8 434.4 1189.8 441.3 1180.3 443.5ZM1194.5 432.4 1239.7 422.1 1244.1 428.9 1198.6 439.3ZM927.0 501.2 1143.4 451.7 1147.2 458.9 929.4 509.2ZM1161.6 447.5 1171.3 445.3 1175.3 452.4 1165.6 454.6ZM1225.6 432.8 1235.0 430.7 1239.3 437.6 1229.9 439.7ZM939.7 506.5 1156.4 456.4 1160.4 463.7 942.1 514.5ZM1165.4 454.3 1175.1 452.1 1179.2 459.3 1169.4 461.6ZM1184.0 450.0 1202.8 445.7 1207.0 452.8 1188.1 457.2ZM1220.7 441.6 1230.1 439.4 1234.5 446.4 1225.0 448.6ZM942.1 514.2 1102.9 476.7 1106.5 484.3 944.6 522.3ZM1112.2 474.6 1131.8 470.0 1135.6 477.5 1115.9 482.1ZM1140.9 467.9 1150.8 465.6 1154.7 473.0 1144.8 475.3ZM1159.8 463.5 1225.2 448.3 1229.6 455.4 1163.8 470.9ZM954.9 519.6 1145.0 475.0 1148.9 482.5 957.6 527.8ZM1154.2 472.8 1173.5 468.3 1177.6 475.7 1158.1 480.3ZM1210.6 459.6 1238.6 453.0 1243.1 460.2 1214.9 466.9ZM957.5 527.5 1243.0 460.0 1247.5 467.3 960.2 535.8ZM960.0 535.5 1247.3 467.0 1252.0 474.4 962.8 543.9ZM962.7 543.6 1251.8 474.1 1256.5 481.7 965.4 552.2ZM965.3 551.9 1256.3 481.4 1261.1 489.0 968.1 560.6ZM968.0 560.2 1260.9 488.7 1265.7 496.5 970.9 569.1ZM1066.4 545.2 1246.4 500.9 1251.2 508.8 1070.0 553.8ZM1121.6 540.6 1231.7 513.3 1236.4 521.4 1125.6 549.2ZM1250.7 508.6 1345.3 485.1 1350.7 492.8 1255.5 516.6ZM1166.2 538.6 1186.7 533.5 1191.2 541.9 1170.5 547.1ZM1196.3 531.1 1294.1 506.6 1299.3 514.6 1200.9 539.5ZM1350.1 492.6 1378.1 485.6 1383.8 493.3 1355.6 500.4ZM1423.0 474.3 1441.1 469.8 1447.2 477.3 1428.9 481.9ZM1210.7 536.6 1231.0 531.5 1235.8 539.9 1215.3 545.1ZM1298.7 514.4 1355.8 500.0 1361.4 507.9 1303.9 522.5ZM1446.6 477.1 1455.9 474.7 1462.0 482.3 1452.7 484.6ZM1303.7 522.2 1323.3 517.2 1328.7 525.4 1309.0 530.5ZM1360.8 507.7 1389.1 500.5 1394.9 508.4 1366.4 515.7ZM1308.8 530.2 1318.9 527.6 1324.4 535.9 1314.2 538.5Z" fill="#c5c5c5"/><path d="M967.4 306.8 984.3 303.6 986.6 308.8 969.6 312.1ZM1097.0 282.4 1105.2 280.8 1108.1 285.8 1099.9 287.3ZM980.1 315.4 988.8 313.7 991.1 319.1 982.3 320.8ZM1070.6 298.1 1079.0 296.5 1081.8 301.7 1073.4 303.3ZM1094.7 293.5 1102.9 291.9 1105.9 297.1 1097.6 298.7ZM984.5 325.8 993.3 324.1 995.7 329.6 986.8 331.4ZM1108.4 301.9 1116.7 300.3 1119.8 305.5 1111.4 307.1ZM1124.4 298.8 1132.6 297.2 1135.8 302.4 1127.5 304.0ZM1148.2 294.2 1156.4 292.6 1159.6 297.7 1151.4 299.3ZM961.0 336.2 970.0 334.4 972.2 340.0 963.2 341.8ZM1020.6 324.5 1062.6 316.4 1065.4 321.8 1023.2 330.1ZM954.4 343.3 963.5 341.5 965.7 347.2 956.6 349.0ZM997.6 334.8 1023.5 329.8 1026.1 335.3 1000.1 340.5ZM991.4 342.0 1000.3 340.2 1002.8 345.9 993.8 347.7ZM815.8 395.4 863.2 385.9 864.9 392.2 817.2 401.9ZM1331.8 291.6 1339.6 290.0 1344.0 295.1 1336.1 296.7ZM817.2 401.6 827.1 399.6 828.6 406.1 818.6 408.1ZM1343.5 295.0 1351.4 293.4 1355.8 298.5 1348.0 300.1ZM1127.5 351.0 1144.7 347.5 1148.1 353.3 1130.8 356.9ZM1122.2 358.4 1131.0 356.6 1134.4 362.5 1125.5 364.4ZM1147.6 353.2 1156.4 351.3 1159.9 357.2 1151.1 359.0ZM832.5 425.1 842.6 423.0 844.3 429.8 834.1 432.0ZM1159.4 357.0 1168.2 355.2 1171.8 361.1 1163.0 363.0ZM834.0 431.7 844.2 429.6 845.9 436.5 835.6 438.6ZM958.3 405.6 968.0 403.6 970.4 410.1 960.7 412.2ZM1188.2 357.4 1196.9 355.6 1200.7 361.5 1191.9 363.3ZM1213.2 352.2 1221.8 350.4 1225.8 356.2 1217.1 358.0ZM922.9 419.9 932.7 417.8 935.0 424.6 925.0 426.7ZM1157.8 370.3 1175.2 366.6 1178.9 372.7 1161.4 376.4ZM1225.3 356.0 1233.9 354.2 1237.9 360.1 1229.3 361.9ZM915.4 428.5 925.3 426.3 927.5 433.2 917.5 435.3ZM934.5 424.4 944.4 422.3 946.7 429.1 936.8 431.2ZM898.0 439.2 917.8 435.0 920.0 442.0 900.0 446.3ZM936.7 430.9 946.7 428.8 949.0 435.7 939.0 437.9ZM899.9 446.0 910.1 443.8 912.3 450.9 902.0 453.1ZM948.5 435.5 968.1 431.3 970.6 438.2 950.9 442.5ZM1210.5 392.7 1219.5 390.7 1223.6 397.1 1214.6 399.1ZM1214.4 398.8 1223.4 396.8 1227.6 403.3 1218.5 405.3ZM1218.3 405.0 1227.4 403.0 1231.6 409.5 1222.5 411.6ZM1231.1 409.4 1240.2 407.3 1244.5 413.9 1235.4 416.0ZM1235.2 415.7 1244.4 413.7 1248.7 420.3 1239.5 422.4ZM1239.4 422.2 1248.6 420.1 1253.0 426.8 1243.7 429.0ZM1243.6 428.7 1252.8 426.6 1257.3 433.4 1248.0 435.6ZM929.3 508.9 940.1 506.4 942.6 514.4 931.7 516.9ZM1238.8 437.4 1248.2 435.2 1252.7 442.2 1243.3 444.4ZM931.6 516.6 942.5 514.1 945.0 522.2 934.1 524.8ZM1234.0 446.2 1243.4 444.0 1247.9 451.1 1238.4 453.4ZM934.0 524.5 955.3 519.5 958.0 527.7 936.5 532.8ZM1238.3 453.1 1247.8 450.9 1252.3 458.1 1242.8 460.3ZM936.4 532.4 957.9 527.4 960.6 535.7 938.9 540.9ZM1242.6 460.0 1252.1 457.8 1256.8 465.1 1247.1 467.4ZM938.8 540.5 960.5 535.4 963.2 543.8 941.4 549.1ZM1247.0 467.1 1256.6 464.8 1261.3 472.2 1251.6 474.5ZM952.0 546.2 963.1 543.5 965.9 552.1 954.7 554.8ZM1251.4 474.2 1261.1 471.9 1265.8 479.4 1256.1 481.8ZM954.6 554.5 965.8 551.8 968.6 560.5 957.3 563.2ZM1255.9 481.5 1265.7 479.1 1270.5 486.7 1260.7 489.1ZM957.2 562.9 968.5 560.1 971.3 569.0 960.0 571.8ZM1260.5 488.8 1270.3 486.4 1275.2 494.1 1265.3 496.6ZM1482.0 468.1 1491.1 465.8 1497.4 473.2 1488.3 475.6ZM1322.9 517.3 1332.8 514.8 1338.3 522.9 1328.4 525.5ZM1388.7 500.6 1398.3 498.1 1404.2 506.0 1394.6 508.5ZM1328.1 525.2 1338.1 522.6 1343.7 530.9 1333.7 533.5ZM1323.8 535.7 1333.8 533.1 1339.4 541.5 1329.3 544.1Z" fill="#0e0e0e"/>
<path d="M96.5 179.5L-23436.9 34222.4M261.2 157.3L-9816.7 21024.9M416.2 136.4L-2490.6 10715.4M562.4 116.7L97.9 7072.9M700.4 98.1L1421.5 5210.3M830.9 80.6L2225.2 4079.2M954.5 63.9L2765.2 3319.4M1071.7 48.1L3152.9 2773.8M1183.1 33.1L3444.7 2363.1M1289.0 18.9L3672.4 2042.7M1389.9 5.3L3855.0 1785.8M96.5 179.5L1389.9 5.3M39.9 261.3L1454.2 51.7M-30.8 363.6L1530.0 106.4M-121.6 495.0L1620.6 171.9M-242.5 669.9L1731.1 251.7M-411.6 914.4L1868.5 351.0M-664.5 1280.3L2044.3 477.9M-1084.5 1887.8L2277.0 646.0M-1918.3 3094.0L2599.7 879.1M-4372.6 6644.3L3076.9 1223.8M-19201.0 34230.7L3855.0 1785.8" stroke="#a0a0a4" stroke-opacity="0.42" stroke-width="1" fill="none" shape-rendering="crispEdges"/>
<path d="M839.0 375.8 850.1 373.6 851.9 380.7 840.8 382.9Z" fill="#00ff15"/><path d="M841.7 375.3 852.8 373.1 854.7 380.2 843.5 382.4Z" fill="#00ff1c"/><path d="M844.5 374.7 855.5 372.6 857.4 379.6 846.3 381.8Z" fill="#00ff23"/><path d="M847.2 374.2 858.2 372.0 860.1 379.1 849.0 381.3Z" fill="#00ff2a"/><path d="M849.9 373.7 860.9 371.5 862.9 378.6 851.7 380.8Z" fill="#00ff31"/><path d="M852.6 373.2 863.6 371.0 865.6 378.0 854.5 380.3Z" fill="#00ff38"/><path d="M855.4 372.7 866.4 370.5 868.3 377.5 857.2 379.7Z" fill="#00ff3f"/><path d="M858.1 372.1 869.1 370.0 871.1 377.0 860.0 379.2Z" fill="#00ff46"/><path d="M860.8 371.6 871.8 369.4 873.8 376.5 862.7 378.7Z" fill="#00ff4d"/><path d="M863.5 371.1 874.5 368.9 876.5 375.9 865.5 378.1Z" fill="#00ff55"/><path d="M863.5 371.1 874.5 368.9 876.5 375.9 865.5 378.1Z" fill="#00ff55"/><path d="M866.3 370.6 877.2 368.4 879.3 375.4 868.2 377.6Z" fill="#00ff5c"/><path d="M869.0 370.1 880.0 367.9 882.0 374.9 871.0 377.1Z" fill="#00ff64"/><path d="M871.8 369.6 882.7 367.4 884.8 374.4 873.8 376.6Z" fill="#00ff6c"/><path d="M874.5 369.0 885.4 366.9 887.5 373.9 876.5 376.1Z" fill="#00ff74"/><path d="M877.3 368.5 888.2 366.4 890.3 373.4 879.3 375.5Z" fill="#00ff7c"/><path d="M880.0 368.0 890.9 365.9 893.0 372.8 882.1 375.0Z" fill="#00ff84"/><path d="M882.7 367.5 893.6 365.4 895.8 372.3 884.8 374.5Z" fill="#00ff8c"/><path d="M885.5 367.0 896.4 364.9 898.5 371.8 887.6 374.0Z" fill="#00ff94"/><path d="M885.5 367.0 896.4 364.9 898.5 371.8 887.6 374.0Z" fill="#00ff94"/><path d="M887.5 366.6 898.4 364.4 900.6 371.4 889.7 373.6Z" fill="#54ff00"/><path d="M860.5 398.2 870.7 396.1 872.5 402.8 862.3 404.9Z" fill="#00ff7f"/><path d="M857.0 404.2 868.4 401.9 870.4 409.4 859.0 411.8Z" fill="#1500ff"/><path d="M858.8 400.9 870.2 398.6 872.2 406.1 860.8 408.4Z" fill="#1500ff"/><path d="M853.9 413.6 864.3 411.5 866.1 418.4 855.7 420.6Z" fill="#00ff21"/><path d="M924.7 424.2 936.1 421.7 938.8 429.6 927.2 432.1Z" fill="#f6ff00"/><path d="M926.8 422.0 938.2 419.5 940.8 427.4 929.3 429.8Z" fill="#d8ff00"/><path d="M928.9 419.8 940.2 417.4 942.9 425.1 931.4 427.6Z" fill="#bbff00"/><path d="M930.9 417.6 942.3 415.2 944.9 422.9 933.5 425.3Z" fill="#9dff00"/><path d="M933.0 415.3 944.3 413.0 947.0 420.7 935.6 423.1Z" fill="#7fff00"/><path d="M933.0 415.3 944.3 413.0 947.0 420.7 935.6 423.1Z" fill="#7fff00"/><path d="M935.0 413.9 946.3 411.5 949.0 419.2 937.6 421.6Z" fill="#72ff00"/><path d="M937.0 412.4 948.3 410.0 951.0 417.6 939.6 420.1Z" fill="#65ff00"/><path d="M939.0 410.9 950.3 408.5 953.0 416.1 941.7 418.5Z" fill="#59ff00"/><path d="M941.0 409.4 952.3 407.0 955.0 414.6 943.7 417.0Z" fill="#4cff00"/><path d="M943.1 407.9 954.3 405.5 957.0 413.1 945.7 415.5Z" fill="#3fff00"/><path d="M943.1 407.9 954.3 405.5 957.0 413.1 945.7 415.5Z" fill="#3fff00"/><path d="M946.1 406.1 957.2 403.8 960.0 411.4 948.7 413.7Z" fill="#00ff00"/><path d="M949.1 404.4 960.2 402.1 963.0 409.6 951.7 412.0Z" fill="#00ff3f"/><path d="M949.1 404.4 960.2 402.1 963.0 409.6 951.7 412.0Z" fill="#00ff3f"/><path d="M951.5 405.2 962.7 402.8 965.5 410.4 954.3 412.7Z" fill="#00ff15"/><path d="M954.0 405.9 965.2 403.6 968.0 411.1 956.8 413.5Z" fill="#15ff00"/><path d="M954.0 405.9 965.2 403.6 968.0 411.1 956.8 413.5Z" fill="#15ff00"/><path d="M955.8 407.8 966.9 405.4 969.8 413.0 958.5 415.4Z" fill="#12ff00"/><path d="M957.5 409.6 968.7 407.3 971.5 414.9 960.3 417.3Z" fill="#0eff00"/><path d="M959.2 411.5 970.4 409.1 973.3 416.8 962.0 419.2Z" fill="#0bff00"/><path d="M961.0 413.4 972.2 411.0 975.1 418.7 963.8 421.1Z" fill="#08ff00"/><path d="M961.0 413.4 972.2 411.0 975.1 418.7 963.8 421.1Z" fill="#08ff00"/><path d="M963.4 415.0 974.7 412.7 977.6 420.4 966.2 422.8Z" fill="#00ff01"/><path d="M965.9 416.7 977.1 414.3 980.1 422.1 968.7 424.5Z" fill="#00ff0b"/><path d="M968.3 418.4 979.6 416.0 982.6 423.8 971.2 426.2Z" fill="#00ff15"/><path d="M975.0 395.9 986.0 393.6 988.9 401.0 977.9 403.3Z" fill="#15ff00"/><path d="M978.6 393.0 989.6 390.8 992.5 398.1 981.5 400.4Z" fill="#00ff00"/><path d="M1002.8 297.5 1011.7 295.8 1014.2 301.2 1005.3 302.8Z" fill="#0000ff"/><path d="M1006.1 297.2 1014.9 295.6 1017.4 300.9 1008.6 302.6Z" fill="#1f00ff"/><path d="M1009.3 297.0 1018.1 295.3 1020.7 300.6 1011.8 302.3Z" fill="#3f00ff"/><path d="M1009.3 297.0 1018.1 295.3 1020.7 300.6 1011.8 302.3Z" fill="#3f00ff"/><path d="M1012.8 296.7 1021.6 295.1 1024.2 300.4 1015.3 302.1Z" fill="#5b00ff"/><path d="M1016.2 296.5 1025.0 294.9 1027.6 300.2 1018.8 301.9Z" fill="#7700ff"/><path d="M1017.9 306.8 1026.8 305.1 1029.5 310.6 1020.5 312.3Z" fill="#3f00ff"/><path d="M1020.4 315.0 1029.3 313.3 1032.0 318.8 1023.0 320.6Z" fill="#00a9ff"/><path d="M983.8 332.9 993.0 331.1 995.5 336.9 986.2 338.7Z" fill="#54ff00"/><path d="M986.7 331.0 995.9 329.2 998.4 335.0 989.1 336.8Z" fill="#00bfff"/><path d="M986.7 331.0 995.9 329.2 998.4 335.0 989.1 336.8Z" fill="#00bfff"/><path d="M989.4 329.3 998.6 327.5 1001.1 333.2 991.9 335.0Z" fill="#0094ff"/><path d="M992.2 327.5 1001.3 325.7 1003.9 331.5 994.7 333.3Z" fill="#006aff"/><path d="M992.2 327.5 1001.3 325.7 1003.9 331.5 994.7 333.3Z" fill="#006aff"/><path d="M994.7 326.0 1003.8 324.3 1006.4 330.0 997.2 331.8Z" fill="#004aff"/><path d="M997.2 324.5 1006.3 322.8 1008.9 328.5 999.7 330.3Z" fill="#002aff"/><path d="M997.2 324.5 1006.3 322.8 1008.9 328.5 999.7 330.3Z" fill="#002aff"/><path d="M1000.0 322.8 1009.1 321.1 1011.7 326.7 1002.6 328.5Z" fill="#1500ff"/><path d="M1021.6 328.0 1030.7 326.2 1033.4 332.0 1024.3 333.8Z" fill="#0094ff"/><path d="M1026.7 329.6 1035.2 328.0 1037.8 333.3 1029.3 335.0Z" fill="#3f00ff"/><path d="M1029.3 328.5 1037.8 326.8 1040.4 332.2 1031.9 333.9Z" fill="#5c00ff"/><path d="M1031.9 327.3 1040.4 325.7 1043.0 331.0 1034.5 332.7Z" fill="#7800ff"/><path d="M1034.5 326.2 1042.9 324.5 1045.5 329.8 1037.1 331.5Z" fill="#9400ff"/><path d="M1034.5 326.2 1042.9 324.5 1045.5 329.8 1037.1 331.5Z" fill="#9400ff"/><path d="M1037.0 325.0 1045.4 323.4 1048.0 328.7 1039.6 330.4Z" fill="#9700ff"/><path d="M1039.5 323.9 1047.9 322.3 1050.5 327.6 1042.1 329.3Z" fill="#9b00ff"/><path d="M1042.0 322.8 1050.4 321.2 1053.0 326.5 1044.6 328.1Z" fill="#9e00ff"/><path d="M1044.5 321.7 1052.9 320.0 1055.5 325.3 1047.1 327.0Z" fill="#a100ff"/><path d="M1044.5 321.7 1052.9 320.0 1055.5 325.3 1047.1 327.0Z" fill="#a100ff"/><path d="M1047.1 320.5 1055.4 318.9 1058.1 324.2 1049.7 325.8Z" fill="#9600ff"/><path d="M1049.6 319.4 1058.0 317.7 1060.7 323.0 1052.3 324.6Z" fill="#8a00ff"/><path d="M1052.2 318.2 1060.5 316.6 1063.3 321.8 1054.9 323.5Z" fill="#7f00ff"/><path d="M1056.4 314.0 1063.3 312.7 1065.6 317.0 1058.6 318.3Z" fill="#0015ff"/><path d="M1059.6 317.3 1068.5 315.5 1071.4 321.1 1062.5 322.9Z" fill="#00f6ff"/><path d="M1062.7 316.9 1071.6 315.1 1074.6 320.7 1065.6 322.5Z" fill="#00eeff"/><path d="M1065.9 316.5 1074.8 314.7 1077.8 320.3 1068.8 322.1Z" fill="#00e5ff"/><path d="M1069.1 316.1 1077.9 314.3 1081.0 319.9 1072.0 321.7Z" fill="#00dcff"/><path d="M1069.1 316.1 1077.9 314.3 1081.0 319.9 1072.0 321.7Z" fill="#00dcff"/><path d="M1072.1 315.7 1080.9 314.0 1084.0 319.6 1075.0 321.3Z" fill="#00d2ff"/><path d="M1075.1 315.3 1083.9 313.6 1087.0 319.2 1078.1 320.9Z" fill="#00c7ff"/><path d="M1078.1 315.0 1086.9 313.2 1090.0 318.8 1081.1 320.6Z" fill="#00bdff"/><path d="M1081.1 314.6 1089.9 312.9 1093.0 318.4 1084.1 320.2Z" fill="#00b2ff"/><path d="M1081.1 314.6 1089.9 312.9 1093.0 318.4 1084.1 320.2Z" fill="#00b2ff"/><path d="M1083.7 314.3 1092.5 312.5 1095.6 318.1 1086.8 319.8Z" fill="#00a8ff"/><path d="M1086.4 313.9 1095.2 312.2 1098.3 317.8 1089.4 319.5Z" fill="#009eff"/><path d="M1089.0 313.6 1097.9 311.9 1101.0 317.4 1092.1 319.2Z" fill="#0094ff"/><path d="M1089.0 313.6 1097.9 311.9 1101.0 317.4 1092.1 319.2Z" fill="#0094ff"/><path d="M1090.6 313.4 1099.4 311.7 1102.5 317.2 1093.6 319.0Z" fill="#00ff7f"/><path d="M1099.1 307.5 1107.8 305.8 1111.0 311.3 1102.2 313.0Z" fill="#bfff00"/><path d="M1108.1 297.7 1116.7 296.0 1119.9 301.4 1111.2 303.0Z" fill="#ffb600"/><path d="M1119.9 285.2 1128.4 283.6 1131.6 288.8 1123.1 290.4Z" fill="#00ff77"/><path d="M1121.9 284.3 1130.4 282.7 1133.6 287.8 1125.1 289.5Z" fill="#00ff94"/><path d="M1134.1 275.2 1142.4 273.7 1145.7 278.7 1137.3 280.3Z" fill="#00e9ff"/><path d="M1137.2 276.2 1145.5 274.7 1148.8 279.8 1140.4 281.4Z" fill="#0088ff"/><path d="M1137.2 276.2 1145.5 274.7 1148.8 279.8 1140.4 281.4Z" fill="#0088ff"/><path d="M1140.7 279.7 1149.0 278.1 1152.4 283.3 1143.9 284.9Z" fill="#0088ff"/><path d="M1140.7 279.7 1149.0 278.1 1152.4 283.3 1143.9 284.9Z" fill="#0088ff"/><path d="M1141.2 283.3 1149.6 281.6 1153.0 286.8 1144.5 288.4Z" fill="#00ffdd"/><path d="M1142.5 296.6 1150.5 295.0 1153.6 300.0 1145.6 301.6Z" fill="#00ff15"/><path d="M1145.4 296.1 1153.4 294.5 1156.6 299.5 1148.6 301.1Z" fill="#00ff21"/><path d="M1145.4 296.1 1153.4 294.5 1156.6 299.5 1148.6 301.1Z" fill="#00ff21"/><path d="M1147.9 295.7 1155.9 294.1 1159.1 299.1 1151.1 300.7Z" fill="#00ffda"/><path d="M1150.4 295.3 1158.4 293.7 1161.6 298.7 1153.6 300.3Z" fill="#006aff"/><path d="M1150.4 295.3 1158.4 293.7 1161.6 298.7 1153.6 300.3Z" fill="#006aff"/><path d="M1153.4 294.9 1161.4 293.4 1164.6 298.4 1156.6 299.9Z" fill="#003fff"/><path d="M1156.4 294.6 1164.4 293.1 1167.6 298.0 1159.6 299.6Z" fill="#0015ff"/><path d="M1156.4 294.6 1164.4 293.1 1167.6 298.0 1159.6 299.6Z" fill="#0015ff"/><path d="M1159.0 294.3 1166.9 292.8 1170.2 297.7 1162.2 299.3Z" fill="#0012ff"/><path d="M1161.6 294.0 1169.5 292.5 1172.8 297.4 1164.8 299.0Z" fill="#0010ff"/><path d="M1164.2 293.7 1172.1 292.2 1175.4 297.1 1167.5 298.7Z" fill="#000dff"/><path d="M1166.8 293.4 1174.7 291.9 1178.0 296.8 1170.1 298.4Z" fill="#000bff"/><path d="M1169.4 293.1 1177.3 291.6 1180.6 296.5 1172.7 298.1Z" fill="#0008ff"/><path d="M1169.4 293.1 1177.3 291.6 1180.6 296.5 1172.7 298.1Z" fill="#0008ff"/><path d="M1172.1 292.8 1180.0 291.2 1183.3 296.2 1175.4 297.7Z" fill="#0016ff"/><path d="M1174.7 292.4 1182.6 290.9 1185.9 295.8 1178.0 297.4Z" fill="#0024ff"/><path d="M1177.4 292.1 1185.3 290.6 1188.6 295.5 1180.7 297.1Z" fill="#0033ff"/><path d="M1177.4 292.1 1185.3 290.6 1188.6 295.5 1180.7 297.1Z" fill="#0033ff"/><path d="M1180.3 291.8 1188.1 290.2 1191.5 295.2 1183.6 296.7Z" fill="#005dff"/><path d="M1183.1 291.4 1190.9 289.9 1194.3 294.8 1186.4 296.3Z" fill="#0088ff"/><path d="M1183.1 291.4 1190.9 289.9 1194.3 294.8 1186.4 296.3Z" fill="#0088ff"/><path d="M1185.6 291.7 1193.4 290.2 1196.8 295.1 1188.9 296.6Z" fill="#00ffb0"/><path d="M1188.1 292.0 1195.9 290.5 1199.3 295.4 1191.5 296.9Z" fill="#15ff00"/><path d="M1188.1 292.0 1195.9 290.5 1199.3 295.4 1191.5 296.9Z" fill="#15ff00"/><path d="M1190.4 290.8 1198.2 289.3 1201.6 294.2 1193.8 295.7Z" fill="#7fff00"/><path d="M1192.7 289.5 1200.5 288.0 1203.9 292.9 1196.1 294.5Z" fill="#e9ff00"/><path d="M1195.0 288.3 1202.8 286.8 1206.2 291.7 1198.4 293.2Z" fill="#ffaa00"/><path d="M1195.0 288.3 1202.8 286.8 1206.2 291.7 1198.4 293.2Z" fill="#ffaa00"/><path d="M1198.4 287.1 1206.2 285.6 1209.7 290.4 1201.9 292.0Z" fill="#bfff00"/><path d="M1201.9 285.8 1209.7 284.3 1213.1 289.2 1205.3 290.7Z" fill="#2aff00"/><path d="M1201.9 285.8 1209.7 284.3 1213.1 289.2 1205.3 290.7Z" fill="#2aff00"/><path d="M1203.9 287.3 1211.7 285.8 1215.1 290.7 1207.3 292.2Z" fill="#00ffa9"/><path d="M1205.9 288.8 1213.7 287.3 1217.2 292.2 1209.3 293.7Z" fill="#007fff"/><path d="M1205.9 288.8 1213.7 287.3 1217.2 292.2 1209.3 293.7Z" fill="#007fff"/><path d="M1208.3 292.0 1216.2 290.5 1219.7 295.4 1211.8 296.9Z" fill="#00bfff"/><path d="M1208.3 292.0 1216.2 290.5 1219.7 295.4 1211.8 296.9Z" fill="#00bfff"/><path d="M1209.2 294.6 1217.0 293.1 1220.5 298.0 1212.7 299.6Z" fill="#6aff00"/><path d="M1167.3 350.3 1176.3 348.4 1180.1 354.5 1171.0 356.4Z" fill="#ffb200"/><path d="M1171.1 350.1 1180.1 348.3 1183.9 354.3 1174.9 356.2Z" fill="#fff600"/><path d="M1171.1 350.1 1180.1 348.3 1183.9 354.3 1174.9 356.2Z" fill="#fff600"/><path d="M1173.6 350.1 1182.6 348.3 1186.4 354.3 1177.4 356.2Z" fill="#efff00"/><path d="M1176.1 350.1 1185.1 348.3 1188.9 354.3 1179.9 356.2Z" fill="#d7ff00"/><path d="M1178.6 350.1 1187.6 348.3 1191.4 354.3 1182.4 356.2Z" fill="#bfff00"/><path d="M1178.6 350.1 1187.6 348.3 1191.4 354.3 1182.4 356.2Z" fill="#bfff00"/><path d="M1181.3 350.1 1190.2 348.3 1194.1 354.3 1185.1 356.2Z" fill="#acff00"/><path d="M1183.9 350.1 1192.9 348.3 1196.8 354.3 1187.7 356.2Z" fill="#9aff00"/><path d="M1186.6 350.1 1195.6 348.3 1199.5 354.3 1190.4 356.2Z" fill="#88ff00"/><path d="M1186.6 350.1 1195.6 348.3 1199.5 354.3 1190.4 356.2Z" fill="#88ff00"/><path d="M1190.1 350.4 1199.0 348.6 1203.0 354.6 1193.9 356.5Z" fill="#6eff00"/><path d="M1193.6 350.7 1202.5 348.9 1206.5 354.9 1197.5 356.8Z" fill="#54ff00"/><path d="M1193.6 350.7 1202.5 348.9 1206.5 354.9 1197.5 356.8Z" fill="#54ff00"/><path d="M1195.8 352.8 1204.8 350.9 1208.7 357.0 1199.7 358.9Z" fill="#4aff00"/><path d="M1198.0 354.9 1207.0 353.0 1211.0 359.1 1202.0 361.0Z" fill="#3fff00"/><path d="M1198.0 354.9 1207.0 353.0 1211.0 359.1 1202.0 361.0Z" fill="#3fff00"/><path d="M1198.0 358.4 1207.1 356.5 1211.1 362.6 1202.0 364.6Z" fill="#5fff00"/><path d="M1198.1 361.9 1207.1 360.0 1211.2 366.1 1202.0 368.1Z" fill="#7fff00"/><path d="M1198.1 361.9 1207.1 360.0 1211.2 366.1 1202.0 368.1Z" fill="#7fff00"/><path d="M1197.9 365.4 1207.0 363.4 1211.1 369.7 1201.9 371.6Z" fill="#9fff00"/><path d="M1197.8 368.8 1207.0 366.9 1211.0 373.2 1201.8 375.1Z" fill="#bfff00"/><path d="M1197.8 368.8 1207.0 366.9 1211.0 373.2 1201.8 375.1Z" fill="#bfff00"/><path d="M1197.7 372.3 1206.8 370.4 1210.9 376.7 1201.7 378.7Z" fill="#e9ff00"/><path d="M1205.9 369.7 1215.0 367.8 1219.1 374.1 1210.0 376.1Z" fill="#54ff00"/><path d="M1227.8 360.4 1236.2 358.6 1240.1 364.4 1231.7 366.2Z" fill="#00ff15"/><path d="M1229.8 360.8 1238.2 359.0 1242.2 364.8 1233.7 366.6Z" fill="#00ff3f"/><path d="M1229.8 360.8 1238.2 359.0 1242.2 364.8 1233.7 366.6Z" fill="#00ff3f"/><path d="M1233.8 361.7 1242.2 359.9 1246.2 365.7 1237.8 367.5Z" fill="#00ffff"/><path d="M1233.8 361.7 1242.2 359.9 1246.2 365.7 1237.8 367.5Z" fill="#00ffff"/><path d="M1236.9 362.5 1245.3 360.7 1249.3 366.5 1240.9 368.3Z" fill="#00b4ff"/><path d="M1240.0 363.3 1248.4 361.5 1252.4 367.3 1244.0 369.1Z" fill="#006aff"/><path d="M1240.0 363.3 1248.4 361.5 1252.4 367.3 1244.0 369.1Z" fill="#006aff"/><path d="M1242.7 363.9 1251.1 362.1 1255.1 367.9 1246.7 369.7Z" fill="#00ff1b"/><path d="M1245.3 364.4 1253.7 362.6 1257.8 368.4 1249.4 370.2Z" fill="#ffa100"/><path d="M1248.2 401.6 1256.5 399.8 1260.6 405.8 1252.2 407.6Z" fill="#3fff00"/><path d="M1254.1 405.5 1262.9 403.5 1267.2 409.9 1258.4 411.8Z" fill="#1500ff"/><path d="M1255.5 407.8 1264.2 405.8 1268.6 412.2 1259.7 414.2Z" fill="#5d00ff"/><path d="M1255.5 407.8 1264.2 405.8 1268.6 412.2 1259.7 414.2Z" fill="#5d00ff"/><path d="M1256.9 410.3 1265.7 408.3 1270.1 414.7 1261.2 416.7Z" fill="#7200ff"/><path d="M1258.4 412.8 1267.2 410.8 1271.6 417.2 1262.7 419.2Z" fill="#8700ff"/><path d="M1258.4 412.8 1267.2 410.8 1271.6 417.2 1262.7 419.2Z" fill="#8700ff"/><path d="M1259.9 415.0 1268.7 413.0 1273.1 419.5 1264.2 421.5Z" fill="#8700ff"/><path d="M1261.4 417.3 1270.2 415.3 1274.6 421.7 1265.7 423.8Z" fill="#8700ff"/><path d="M1262.9 419.5 1271.7 417.5 1276.2 424.0 1267.3 426.1Z" fill="#8700ff"/><path d="M1264.4 421.7 1273.2 419.7 1277.7 426.3 1268.8 428.3Z" fill="#8700ff"/><path d="M1264.4 421.7 1273.2 419.7 1277.7 426.3 1268.8 428.3Z" fill="#8700ff"/><path d="M1266.0 424.2 1274.9 422.1 1279.3 428.7 1270.4 430.8Z" fill="#8000ff"/><path d="M1267.6 426.6 1276.5 424.5 1281.0 431.1 1272.0 433.2Z" fill="#7900ff"/><path d="M1269.2 429.0 1278.1 426.9 1282.6 433.6 1273.6 435.7Z" fill="#7100ff"/><path d="M1270.8 431.4 1279.7 429.3 1284.3 436.0 1275.3 438.1Z" fill="#6a00ff"/><path d="M1270.8 431.4 1279.7 429.3 1284.3 436.0 1275.3 438.1Z" fill="#6a00ff"/><path d="M1273.0 433.7 1281.9 431.6 1286.5 438.3 1277.5 440.4Z" fill="#3500ff"/><path d="M1275.2 435.9 1284.2 433.8 1288.7 440.5 1279.7 442.7Z" fill="#0000ff"/><path d="M1297.5 435.9 1307.1 433.7 1312.2 440.9 1302.5 443.2Z" fill="#5d00ff"/><path d="M1298.4 437.8 1308.0 435.5 1313.1 442.8 1303.5 445.1Z" fill="#0000ff"/><path d="M1261.8 454.8 1270.9 452.7 1275.5 459.7 1266.3 461.9Z" fill="#8700ff"/><path d="M1263.2 457.7 1272.4 455.6 1277.0 462.6 1267.7 464.8Z" fill="#8200ff"/><path d="M1264.6 460.6 1273.9 458.4 1278.5 465.5 1269.2 467.8Z" fill="#7c00ff"/><path d="M1266.1 463.5 1275.3 461.3 1280.0 468.5 1270.7 470.7Z" fill="#7700ff"/><path d="M1266.1 463.5 1275.3 461.3 1280.0 468.5 1270.7 470.7Z" fill="#7700ff"/><path d="M1267.2 465.8 1276.5 463.6 1281.1 470.8 1271.8 473.0Z" fill="#7100ff"/><path d="M1268.3 468.1 1277.6 465.9 1282.3 473.1 1272.9 475.3Z" fill="#6c00ff"/><path d="M1269.4 470.4 1278.7 468.2 1283.4 475.4 1274.1 477.7Z" fill="#6700ff"/><path d="M1270.6 472.7 1279.9 470.5 1284.6 477.7 1275.2 480.0Z" fill="#6200ff"/><path d="M1271.7 475.0 1281.0 472.7 1285.8 480.0 1276.4 482.3Z" fill="#5d00ff"/><path d="M1271.7 475.0 1281.0 472.7 1285.8 480.0 1276.4 482.3Z" fill="#5d00ff"/><path d="M1273.0 477.6 1282.3 475.3 1287.1 482.7 1277.7 485.0Z" fill="#5000ff"/><path d="M1274.3 480.2 1283.7 477.9 1288.5 485.3 1279.0 487.6Z" fill="#4300ff"/><path d="M1275.6 482.8 1285.0 480.5 1289.8 487.9 1280.3 490.3Z" fill="#3700ff"/><path d="M1276.9 485.4 1286.3 483.1 1291.1 490.6 1281.7 492.9Z" fill="#2a00ff"/><path d="M1276.9 485.4 1286.3 483.1 1291.1 490.6 1281.7 492.9Z" fill="#2a00ff"/><path d="M1278.1 487.9 1287.5 485.6 1292.4 493.0 1282.9 495.4Z" fill="#1f00ff"/><path d="M1279.3 490.3 1288.8 488.0 1293.6 495.5 1284.1 497.8Z" fill="#1500ff"/><path d="M1280.5 492.7 1290.0 490.4 1294.9 497.9 1285.3 500.3Z" fill="#0a00ff"/><path d="M1281.7 495.2 1291.2 492.8 1296.1 500.4 1286.5 502.8Z" fill="#0000ff"/><path d="M1285.3 502.8 1295.6 500.2 1300.9 508.4 1290.6 511.0Z" fill="#00ffa9"/><path d="M1347.7 538.6 1358.1 535.8 1364.1 544.6 1353.6 547.4Z" fill="#fff600"/><path d="M1349.3 541.0 1359.7 538.2 1365.8 547.1 1355.3 549.8Z" fill="#ffbf00"/><path d="M1349.3 541.0 1359.7 538.2 1365.8 547.1 1355.3 549.8Z" fill="#ffbf00"/><path d="M1350.5 543.7 1361.0 540.9 1367.0 549.8 1356.5 552.6Z" fill="#ff9f00"/><path d="M1351.7 546.4 1362.2 543.7 1368.3 552.6 1357.8 555.4Z" fill="#ff7f00"/><path d="M1351.7 546.4 1362.2 543.7 1368.3 552.6 1357.8 555.4Z" fill="#ff7f00"/><path d="M1350.7 548.9 1361.2 546.1 1367.3 555.1 1356.7 557.9Z" fill="#ff5900"/><path d="M1349.7 551.4 1360.2 548.6 1366.4 557.6 1355.7 560.4Z" fill="#ff3200"/><path d="M1349.7 551.4 1360.2 548.6 1366.4 557.6 1355.7 560.4Z" fill="#ff3200"/><path d="M1348.0 553.5 1358.5 550.7 1364.7 559.7 1354.0 562.5Z" fill="#ff0800"/><path d="M1407.2 517.7 1417.3 515.0 1423.7 523.5 1413.5 526.2Z" fill="#94ff00"/><path d="M1408.0 522.1 1418.1 519.4 1424.5 527.9 1414.3 530.6Z" fill="#00bfff"/><path d="M1408.0 522.1 1418.1 519.4 1424.5 527.9 1414.3 530.6Z" fill="#00bfff"/><path d="M1407.7 524.8 1417.9 522.1 1424.3 530.7 1414.1 533.4Z" fill="#00d1ff"/><path d="M1407.5 527.4 1417.7 524.8 1424.1 533.4 1413.9 536.1Z" fill="#00e4ff"/><path d="M1407.3 530.1 1417.5 527.4 1423.9 536.1 1413.7 538.8Z" fill="#00f6ff"/><path d="M1407.3 530.1 1417.5 527.4 1423.9 536.1 1413.7 538.8Z" fill="#00f6ff"/><path d="M1404.4 531.5 1414.6 528.8 1421.0 537.5 1410.7 540.2Z" fill="#00ff79"/><path d="M1401.5 532.8 1411.7 530.1 1418.1 538.8 1407.8 541.6Z" fill="#15ff00"/><path d="M1496.2 483.5 1505.8 481.0 1512.6 488.9 1503.0 491.4Z" fill="#00ff77"/><path d="M1514.9 487.0 1526.5 484.0 1535.1 493.8 1523.4 496.8Z" fill="#00ffa1"/><path d="M1516.9 488.8 1528.5 485.8 1537.2 495.6 1525.4 498.7Z" fill="#00ff94"/><path d="M1518.9 490.6 1530.5 487.6 1539.2 497.4 1527.4 500.5Z" fill="#00ff87"/><path d="M1518.9 490.6 1530.5 487.6 1539.2 497.4 1527.4 500.5Z" fill="#00ff87"/><path d="M1520.8 492.3 1532.5 489.2 1541.2 499.1 1529.4 502.2Z" fill="#00ff7e"/><path d="M1522.8 493.9 1534.5 490.9 1543.2 500.8 1531.5 503.9Z" fill="#00ff74"/><path d="M1524.8 495.6 1536.5 492.5 1545.3 502.4 1533.5 505.6Z" fill="#00ff6a"/><path d="M1524.8 495.6 1536.5 492.5 1545.3 502.4 1533.5 505.6Z" fill="#00ff6a"/><path d="M1527.3 497.8 1539.0 494.7 1547.8 504.7 1536.0 507.8Z" fill="#00ff55"/><path d="M1529.7 500.1 1541.5 497.0 1550.3 507.0 1538.5 510.1Z" fill="#00ff3f"/><path d="M1529.7 500.1 1541.5 497.0 1550.3 507.0 1538.5 510.1Z" fill="#00ff3f"/><path d="M1533.4 503.1 1545.1 499.9 1554.0 510.0 1542.2 513.2Z" fill="#00ff00"/><path d="M1490.5 240.2 1501.5 238.0 1509.4 245.1 1498.3 247.3Z" fill="#d4ff00"/><path d="M1493.5 242.1 1504.6 239.9 1512.5 247.0 1501.4 249.2Z" fill="#00ff15"/><path d="M1493.5 242.1 1504.6 239.9 1512.5 247.0 1501.4 249.2Z" fill="#00ff15"/><path d="M1496.0 243.6 1507.1 241.4 1515.1 248.5 1503.9 250.7Z" fill="#00ff0a"/><path d="M1498.5 245.0 1509.6 242.8 1517.6 250.0 1506.4 252.2Z" fill="#00ff00"/><path d="M1498.5 245.0 1509.6 242.8 1517.6 250.0 1506.4 252.2Z" fill="#00ff00"/><path d="M1500.7 246.5 1511.8 244.3 1519.9 251.5 1508.7 253.7Z" fill="#0aff00"/><path d="M1502.9 248.0 1514.1 245.8 1522.1 253.0 1510.9 255.2Z" fill="#15ff00"/><path d="M1502.9 248.0 1514.1 245.8 1522.1 253.0 1510.9 255.2Z" fill="#15ff00"/><path d="M1505.8 250.0 1517.0 247.8 1525.1 255.0 1513.9 257.3Z" fill="#aaff00"/><path d="M1378.2 283.1 1389.4 280.9 1396.3 288.2 1384.9 290.5Z" fill="#3fff00"/><path d="M1380.9 285.0 1392.2 282.7 1399.1 290.1 1387.7 292.4Z" fill="#00ff00"/><path d="M1380.9 285.0 1392.2 282.7 1399.1 290.1 1387.7 292.4Z" fill="#00ff00"/><path d="M1383.9 286.9 1395.2 284.6 1402.2 292.1 1390.7 294.4Z" fill="#00ff0a"/><path d="M1386.9 288.9 1398.2 286.6 1405.2 294.1 1393.8 296.4Z" fill="#00ff15"/><path d="M1386.9 288.9 1398.2 286.6 1405.2 294.1 1393.8 296.4Z" fill="#00ff15"/><path d="M1390.0 291.0 1401.3 288.7 1408.3 296.2 1396.9 298.6Z" fill="#2aff00"/><path d="M941.2 494.1 952.4 491.5 955.1 499.8 943.8 502.4Z" fill="#1500ff"/><path d="M942.0 496.6 953.3 494.1 956.0 502.4 944.7 505.0Z" fill="#5d00ff"/><path d="M942.0 496.6 953.3 494.1 956.0 502.4 944.7 505.0Z" fill="#5d00ff"/><path d="M943.0 499.6 954.3 497.0 957.0 505.4 945.7 508.0Z" fill="#8e00ff"/><path d="M944.0 502.6 955.3 500.0 958.1 508.4 946.7 511.1Z" fill="#bf00ff"/><path d="M944.0 502.6 955.3 500.0 958.1 508.4 946.7 511.1Z" fill="#bf00ff"/><path d="M945.0 505.4 956.3 502.8 959.1 511.3 947.7 513.9Z" fill="#d100ff"/><path d="M945.9 508.2 957.3 505.6 960.1 514.1 948.6 516.8Z" fill="#e400ff"/><path d="M946.9 511.1 958.3 508.4 961.1 517.0 949.6 519.6Z" fill="#f600ff"/><path d="M946.9 511.1 958.3 508.4 961.1 517.0 949.6 519.6Z" fill="#f600ff"/><path d="M947.8 513.6 959.3 511.0 962.1 519.6 950.6 522.3Z" fill="#f800ff"/><path d="M948.8 516.2 960.2 513.6 963.1 522.2 951.5 524.9Z" fill="#fa00ff"/><path d="M949.7 518.8 961.2 516.1 964.0 524.8 952.5 527.5Z" fill="#fc00ff"/><path d="M950.6 521.4 962.1 518.7 965.0 527.4 953.4 530.2Z" fill="#ff00ff"/><path d="M950.6 521.4 962.1 518.7 965.0 527.4 953.4 530.2Z" fill="#ff00ff"/><path d="M951.7 524.3 963.2 521.6 966.1 530.3 954.5 533.1Z" fill="#ff00ff"/><path d="M952.7 527.2 964.3 524.4 967.1 533.2 955.5 536.0Z" fill="#ff00ff"/><path d="M953.7 530.1 965.3 527.3 968.2 536.2 956.5 539.0Z" fill="#ff00ff"/><path d="M954.7 532.9 966.4 530.2 969.3 539.1 957.6 541.9Z" fill="#ff00ff"/><path d="M954.7 532.9 966.4 530.2 969.3 539.1 957.6 541.9Z" fill="#ff00ff"/><path d="M955.9 535.3 967.5 532.5 970.4 541.4 958.7 544.3Z" fill="#ff00ff"/><path d="M957.0 537.6 968.6 534.8 971.6 543.8 959.8 546.6Z" fill="#ff00ff"/><path d="M958.1 539.9 969.7 537.2 972.7 546.2 961.0 549.0Z" fill="#ff00ff"/><path d="M959.2 542.3 970.9 539.5 973.9 548.5 962.1 551.4Z" fill="#ff00ff"/><path d="M959.2 542.3 970.9 539.5 973.9 548.5 962.1 551.4Z" fill="#ff00ff"/><path d="M961.4 543.6 973.1 540.8 976.1 549.8 964.3 552.7Z" fill="#ff00ff"/><path d="M963.6 544.9 975.4 542.1 978.4 551.1 966.6 554.0Z" fill="#ff00ff"/><path d="M963.6 544.9 975.4 542.1 978.4 551.1 966.6 554.0Z" fill="#ff00ff"/><path d="M966.2 545.4 977.9 542.6 981.0 551.7 969.2 554.5Z" fill="#ff00f6"/><path d="M954.8 506.3 964.6 504.0 967.1 511.3 957.2 513.7Z" fill="#0094ff"/><path d="M961.2 513.9 971.6 511.5 974.3 519.3 963.8 521.8Z" fill="#00bfff"/><path d="M978.1 546.5 984.4 543.9 987.6 558.5 981.2 561.0Z" fill="#c2c4d2" stroke="#6a6c80" stroke-width="0.5"/><path d="M978.7 549.4 L984.6 544.6" stroke="#55576a" stroke-width="0.9" fill="none"/><path d="M979.3 552.3 L985.2 547.6" stroke="#55576a" stroke-width="0.9" fill="none"/><path d="M980.0 555.2 L985.8 550.5" stroke="#55576a" stroke-width="0.9" fill="none"/><path d="M980.6 558.1 L986.5 553.4" stroke="#55576a" stroke-width="0.9" fill="none"/><path d="M1009.1 540.7 1014.8 540.1 1016.7 552.8 1011.0 554.7Z" fill="#c2c4d2" stroke="#6a6c80" stroke-width="0.5"/><path d="M1009.5 543.5 L1014.9 540.7" stroke="#55576a" stroke-width="0.9" fill="none"/><path d="M1009.9 546.3 L1015.3 543.3" stroke="#55576a" stroke-width="0.9" fill="none"/><path d="M1010.3 549.1 L1015.7 545.8" stroke="#55576a" stroke-width="0.9" fill="none"/><path d="M1010.7 551.9 L1016.1 548.4" stroke="#55576a" stroke-width="0.9" fill="none"/><path d="M982.5 569.3 988.8 567.4 990.7 581.3 984.4 583.2Z" fill="#c2c4d2" stroke="#6a6c80" stroke-width="0.5"/><path d="M982.9 572.1 L988.9 568.1" stroke="#55576a" stroke-width="0.9" fill="none"/><path d="M983.3 574.9 L989.3 570.9" stroke="#55576a" stroke-width="0.9" fill="none"/><path d="M983.6 577.7 L989.7 573.7" stroke="#55576a" stroke-width="0.9" fill="none"/><path d="M984.0 580.4 L990.1 576.5" stroke="#55576a" stroke-width="0.9" fill="none"/><path d="M1014.2 565.5 1021.2 564.2 1023.1 577.5 1016.1 578.8Z" fill="#c2c4d2" stroke="#6a6c80" stroke-width="0.5"/><path d="M1014.6 568.1 L1021.3 564.9" stroke="#55576a" stroke-width="0.9" fill="none"/><path d="M1015.0 570.8 L1021.7 567.5" stroke="#55576a" stroke-width="0.9" fill="none"/><path d="M1015.4 573.5 L1022.0 570.2" stroke="#55576a" stroke-width="0.9" fill="none"/><path d="M1015.7 576.1 L1022.4 572.9" stroke="#55576a" stroke-width="0.9" fill="none"/><path d="M988.8 536.9 993.3 540.1 1004.7 540.1 1009.1 540.7 1012.3 561.0 1012.9 581.3 992.6 583.2 990.1 566.1 988.2 547.1Z" fill="#9698ae" stroke="#6e7086" stroke-width="0.5"/><path d="M994.5 563.6 1010.4 562.3 1011.0 566.7 995.2 568.0Z" fill="#c9cbd9"/><path d="M997.1 564.7 1008.5 564.0 1008.8 565.9 997.3 566.6Z" fill="#9698ae"/><path d="M993.9 526.8 1000.9 526.8 1003.4 535.7 1002.8 540.7 994.5 540.7 992.6 535.7Z" fill="#b9bcd2"/><path d="M993.3 535.9 1003.2 535.4 1003.4 538.5 993.8 539.2Z" fill="#34343e"/><path d="M985.7 512.2 990.1 510.3 1002.2 509.7 1003.4 515.4 1002.8 523.6 999.6 526.8 992.0 526.8 986.3 521.7Z" fill="#cdd0e4" stroke="#8a8ca2" stroke-width="0.5"/><path d="M991.4 520.8 999.6 520.4 999.4 523.2 991.8 523.6Z" fill="#20202a"/><path d="M985.4 517.3 987.2 516.9 987.7 522.3 986.2 521.7Z" fill="#3a3a46"/><rect x="990.2" y="512.5" width="1" height="1" fill="#3a3c4c"/><rect x="994.2" y="512.3" width="1" height="1" fill="#4a4c5e"/><rect x="992.9" y="524.9" width="1" height="1" fill="#4a4c5e"/><rect x="990.0" y="519.1" width="1" height="1" fill="#d8dae6"/><rect x="999.2" y="523.5" width="1" height="1" fill="#d8dae6"/><rect x="989.8" y="525.0" width="1" height="1" fill="#d8dae6"/><rect x="999.5" y="513.9" width="1" height="1" fill="#d8dae6"/><rect x="991.1" y="524.1" width="1" height="1" fill="#d8dae6"/><rect x="987.7" y="520.2" width="1" height="1" fill="#3a3c4c"/><rect x="994.6" y="513.6" width="1" height="1" fill="#3a3c4c"/><rect x="990.9" y="525.3" width="1" height="1" fill="#d8dae6"/><rect x="986.4" y="515.4" width="1" height="1" fill="#d8dae6"/><rect x="1000.3" y="518.7" width="1" height="1" fill="#3a3c4c"/><rect x="993.3" y="515.3" width="1" height="1" fill="#3a3c4c"/><rect x="989.0" y="515.6" width="1" height="1" fill="#4a4c5e"/><rect x="987.6" y="518.0" width="1" height="1" fill="#d8dae6"/><rect x="994.9" y="520.8" width="1" height="1" fill="#d8dae6"/><rect x="988.7" y="521.2" width="1" height="1" fill="#4a4c5e"/><rect x="993.1" y="514.0" width="1" height="1" fill="#3a3c4c"/><rect x="990.9" y="516.3" width="1" height="1" fill="#d8dae6"/><rect x="996.8" y="514.0" width="1" height="1" fill="#d8dae6"/><rect x="988.0" y="511.9" width="1" height="1" fill="#5d5f72"/><rect x="995.6" y="564.7" width="1" height="1" fill="#5d5f72"/><rect x="992.2" y="579.3" width="1" height="1" fill="#d8dae6"/><rect x="999.7" y="542.5" width="1" height="1" fill="#4a4c5e"/><rect x="1009.4" y="580.1" width="1" height="1" fill="#d8dae6"/><rect x="989.9" y="552.7" width="1" height="1" fill="#5d5f72"/><rect x="1006.7" y="557.7" width="1" height="1" fill="#4a4c5e"/><rect x="996.0" y="548.6" width="1" height="1" fill="#3a3c4c"/><rect x="996.0" y="551.1" width="1" height="1" fill="#5d5f72"/><rect x="996.8" y="541.1" width="1" height="1" fill="#4a4c5e"/><rect x="999.6" y="555.8" width="1" height="1" fill="#d8dae6"/><rect x="1011.6" y="564.3" width="1" height="1" fill="#3a3c4c"/><rect x="1011.3" y="558.2" width="1" height="1" fill="#5d5f72"/><rect x="992.0" y="543.3" width="1" height="1" fill="#5d5f72"/><rect x="1002.7" y="580.8" width="1" height="1" fill="#4a4c5e"/><rect x="1001.6" y="564.8" width="1" height="1" fill="#d8dae6"/><rect x="1011.6" y="545.8" width="1" height="1" fill="#d8dae6"/><rect x="1006.7" y="557.6" width="1" height="1" fill="#5d5f72"/><rect x="1000.1" y="550.7" width="1" height="1" fill="#3a3c4c"/><rect x="1000.4" y="549.8" width="1" height="1" fill="#3a3c4c"/><rect x="995.0" y="577.4" width="1" height="1" fill="#5d5f72"/><rect x="1000.5" y="542.0" width="1" height="1" fill="#d8dae6"/><rect x="995.1" y="562.4" width="1" height="1" fill="#5d5f72"/><rect x="998.7" y="551.5" width="1" height="1" fill="#d8dae6"/><rect x="990.6" y="579.0" width="1" height="1" fill="#4a4c5e"/><rect x="1011.5" y="557.4" width="1" height="1" fill="#4a4c5e"/><rect x="1000.4" y="544.6" width="1" height="1" fill="#5d5f72"/><rect x="1010.1" y="564.3" width="1" height="1" fill="#5d5f72"/><rect x="996.9" y="567.8" width="1" height="1" fill="#d8dae6"/><rect x="1007.6" y="562.5" width="1" height="1" fill="#d8dae6"/><rect x="997.0" y="556.9" width="1" height="1" fill="#3a3c4c"/><rect x="991.1" y="580.8" width="1" height="1" fill="#5d5f72"/><rect x="990.5" y="577.8" width="1" height="1" fill="#5d5f72"/><rect x="1006.5" y="551.9" width="1" height="1" fill="#4a4c5e"/><rect x="1008.8" y="569.1" width="1" height="1" fill="#3a3c4c"/><rect x="1002.1" y="571.5" width="1" height="1" fill="#3a3c4c"/><rect x="994.3" y="540.9" width="1" height="1" fill="#5d5f72"/><rect x="989.8" y="576.9" width="1" height="1" fill="#4a4c5e"/><rect x="998.3" y="572.5" width="1" height="1" fill="#3a3c4c"/><rect x="1009.0" y="563.4" width="1" height="1" fill="#5d5f72"/><rect x="993.1" y="565.8" width="1" height="1" fill="#3a3c4c"/><rect x="1009.8" y="558.9" width="1" height="1" fill="#4a4c5e"/><rect x="990.2" y="565.3" width="1" height="1" fill="#3a3c4c"/><rect x="1001.9" y="551.3" width="1" height="1" fill="#5d5f72"/><rect x="990.4" y="544.0" width="1" height="1" fill="#4a4c5e"/><rect x="996.1" y="555.0" width="1" height="1" fill="#4a4c5e"/><rect x="991.4" y="563.1" width="1" height="1" fill="#3a3c4c"/><rect x="994.0" y="581.0" width="1" height="1" fill="#3a3c4c"/><rect x="994.7" y="560.8" width="1" height="1" fill="#3a3c4c"/>
</svg>
</div>
</body></html>
